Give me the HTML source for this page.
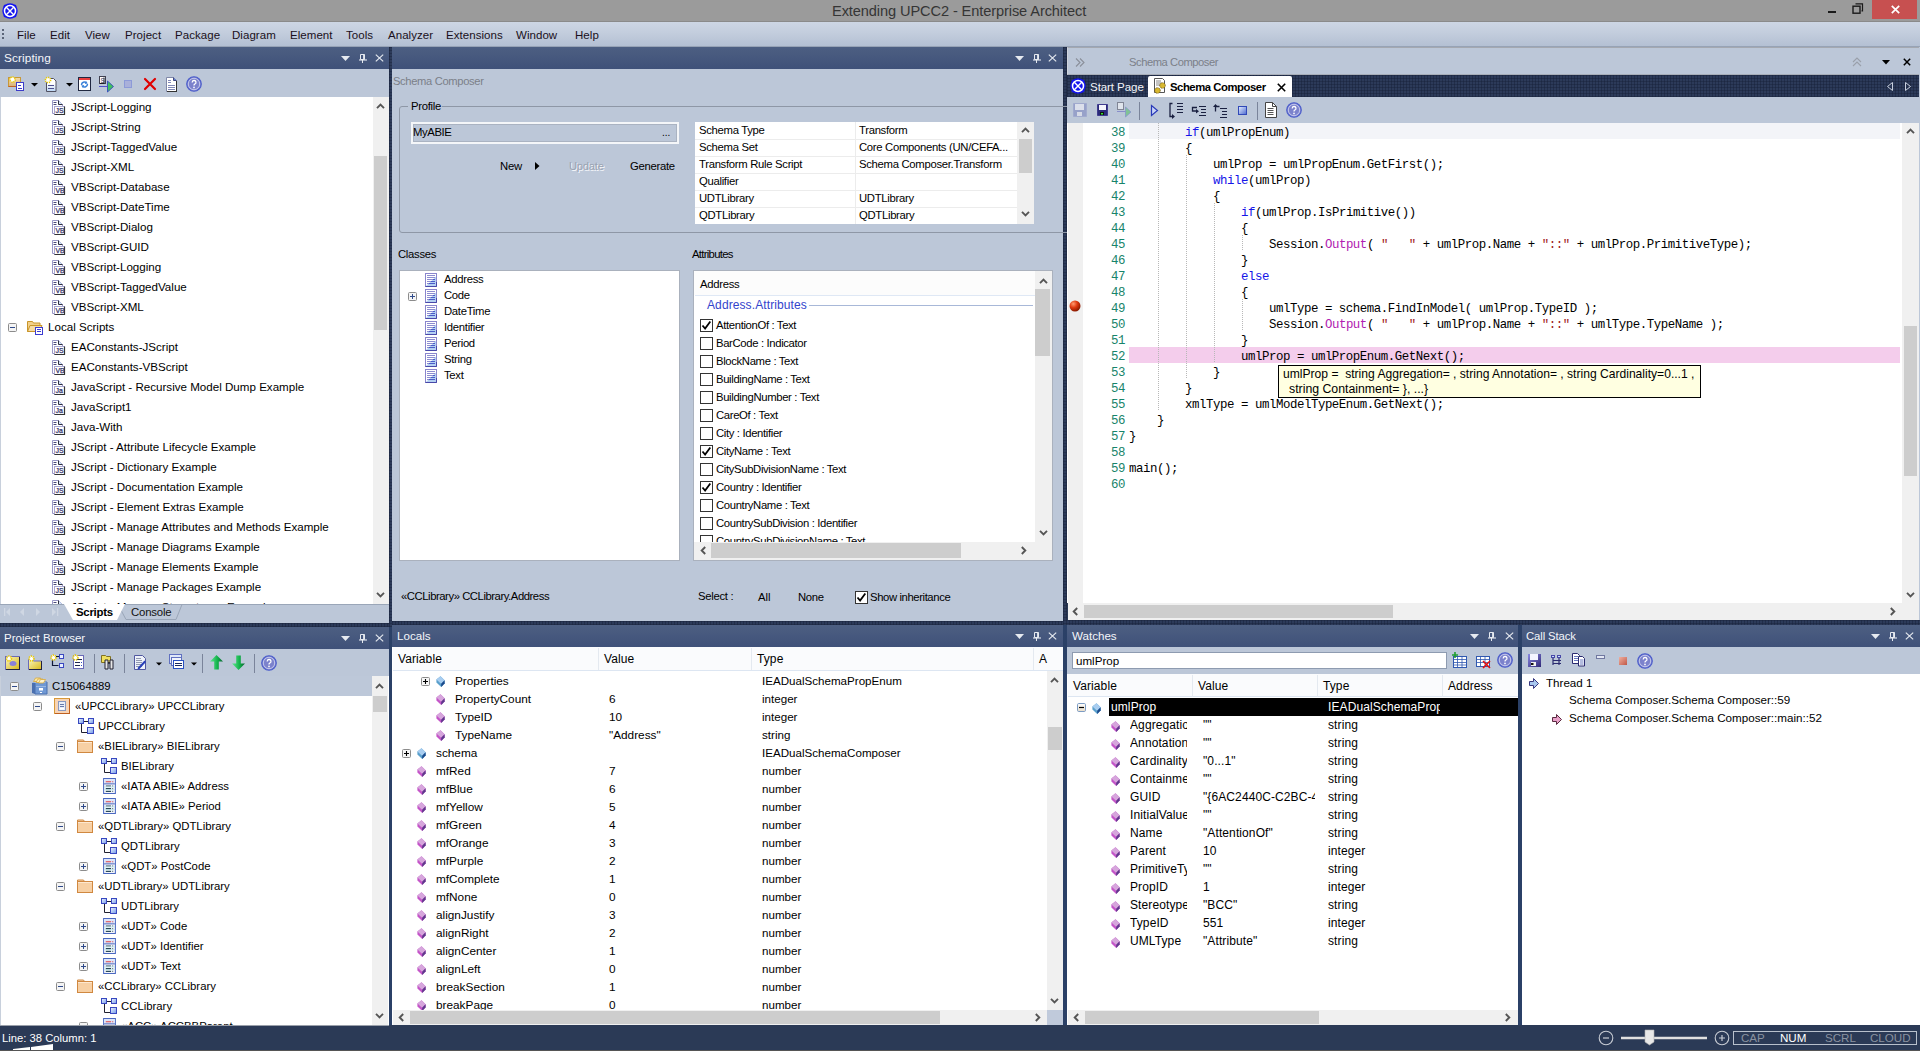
<!DOCTYPE html>
<html><head><meta charset="utf-8"><style>
*{margin:0;padding:0;box-sizing:border-box}
html,body{width:1920px;height:1051px;overflow:hidden;background:#2b3a56;font-family:"Liberation Sans",sans-serif;font-size:11.6px;color:#000}
.a{position:absolute}
.i{position:absolute;overflow:visible}
.t{position:absolute;white-space:nowrap}
.hdr{position:absolute;height:22px;background:linear-gradient(#4d5f82,#3f5179)}
.tb{position:absolute;background:#bcc7d8}
.wh{position:absolute;background:#fff}
.m{font-family:"Liberation Mono",monospace;font-size:12.4px;letter-spacing:-0.44px}
.w{color:#fff}
</style></head><body>

<svg width="0" height="0" style="position:absolute">
<defs>
<symbol id="ea" viewBox="0 0 16 16">
 <circle cx="8" cy="8" r="7.7" fill="#1414f0"/>
 <circle cx="3.4" cy="3.4" r="1.9" fill="#1414f0"/><circle cx="12.6" cy="3.4" r="1.9" fill="#1414f0"/><circle cx="3.4" cy="12.6" r="1.9" fill="#1414f0"/><circle cx="12.6" cy="12.6" r="1.9" fill="#1414f0"/>
 <circle cx="8" cy="8" r="5.5" fill="none" stroke="#fff" stroke-width="1.5"/>
 <path d="M4.3 4.3L11.7 11.7M11.7 4.3L4.3 11.7" stroke="#fff" stroke-width="1.4"/>
</symbol>
<symbol id="scr" viewBox="0 0 14 16">
 <path d="M0.5 0.5H6.5L10.5 4.5V13.5H0.5Z" fill="#fff" stroke="#9a98c8"/>
 <path d="M6.5 0.5V4.5H10.5" fill="#d4e6fa" stroke="#303040"/>
 <path d="M1.5 2.5h3M1.5 4.5h3" stroke="#4a4a78"/>
 <rect x="2.5" y="6.5" width="10" height="8" fill="#fff" stroke="#a8a6d0"/>
 <path d="M12.5 6.5V14.5H2.5" fill="none" stroke="#333" stroke-width="1.2"/>
 <text x="3.6" y="12.9" font-family="Liberation Sans" font-size="6.9" fill="#34346a" stroke="#34346a" stroke-width="0.25" letter-spacing="-0.1">JS</text>
</symbol>
<symbol id="scrvb" viewBox="0 0 14 16">
 <path d="M0.5 0.5H6.5L10.5 4.5V13.5H0.5Z" fill="#fff" stroke="#9a98c8"/>
 <path d="M6.5 0.5V4.5H10.5" fill="#d4e6fa" stroke="#303040"/>
 <path d="M1.5 2.5h3M1.5 4.5h3" stroke="#4a4a78"/>
 <rect x="2.5" y="6.5" width="10" height="8" fill="#fff" stroke="#a8a6d0"/>
 <path d="M12.5 6.5V14.5H2.5" fill="none" stroke="#333" stroke-width="1.2"/>
 <text x="3.6" y="12.9" font-family="Liberation Sans" font-size="6.9" fill="#34346a" stroke="#34346a" stroke-width="0.25" letter-spacing="-0.1">VB</text>
</symbol>
<symbol id="scrja" viewBox="0 0 14 16">
 <path d="M0.5 0.5H6.5L10.5 4.5V13.5H0.5Z" fill="#fff" stroke="#9a98c8"/>
 <path d="M6.5 0.5V4.5H10.5" fill="#d4e6fa" stroke="#303040"/>
 <path d="M1.5 2.5h3M1.5 4.5h3" stroke="#4a4a78"/>
 <rect x="2.5" y="6.5" width="10" height="8" fill="#fff" stroke="#a8a6d0"/>
 <path d="M12.5 6.5V14.5H2.5" fill="none" stroke="#333" stroke-width="1.2"/>
 <text x="3.6" y="12.9" font-family="Liberation Sans" font-size="6.9" fill="#34346a" stroke="#34346a" stroke-width="0.25" letter-spacing="-0.1">Ja</text>
</symbol>
<symbol id="pm" viewBox="0 0 9 9">
 <rect x="0.5" y="0.5" width="8" height="8" rx="1" fill="#f4f4f4" stroke="#8c8c8c"/>
 <path d="M2 4.5h5" stroke="#2f4a8a"/>
</symbol>
<symbol id="pp" viewBox="0 0 9 9">
 <rect x="0.5" y="0.5" width="8" height="8" rx="1" fill="#f4f4f4" stroke="#8c8c8c"/>
 <path d="M2 4.5h5M4.5 2v5" stroke="#2f4a8a"/>
</symbol>
<symbol id="fold" viewBox="0 0 16 16">
 <path d="M0.5 2.5h5l1 1.5h6.5v8.5h-12.5z" fill="#f2d08a" stroke="#c8952a"/>
 <path d="M0.5 12.5l2.5-6h12l-2.5 6z" fill="#f7dca4" stroke="#c8952a"/>
 <rect x="8.5" y="8.5" width="7" height="7" fill="#fff" stroke="#3b3bd0"/>
 <path d="M10 10.5h4M10 12.5h4" stroke="#3b3bd0"/>
</symbol>
<symbol id="hdrdn" viewBox="0 0 9 6"><path d="M0 0h9l-4.5 5z" fill="#e6eaf0"/></symbol>
<symbol id="pin" viewBox="0 0 8 9"><path d="M1.5 0.5h4v5h-4z" fill="none" stroke="#e6eaf0"/><path d="M4.8 0.5v5" stroke="#e6eaf0" stroke-width="1.4"/><path d="M0 6h8" stroke="#e6eaf0" stroke-width="1.1"/><path d="M3.5 6v3" stroke="#e6eaf0"/></symbol>
<symbol id="hx" viewBox="0 0 9 8"><path d="M0.8 0.6l7.4 6.8M8.2 0.6l-7.4 6.8" stroke="#e6eaf0" stroke-width="1.15"/></symbol>
<symbol id="up" viewBox="0 0 9 6"><path d="M1 5.2l3.5-3.5l3.5 3.5" fill="none" stroke="#555" stroke-width="1.9"/></symbol>
<symbol id="dn" viewBox="0 0 9 6"><path d="M1 0.8l3.5 3.5l3.5-3.5" fill="none" stroke="#555" stroke-width="1.9"/></symbol>
<symbol id="lf" viewBox="0 0 6 9"><path d="M5.2 1l-3.5 3.5l3.5 3.5" fill="none" stroke="#555" stroke-width="1.9"/></symbol>
<symbol id="rt" viewBox="0 0 6 9"><path d="M0.8 1l3.5 3.5l-3.5 3.5" fill="none" stroke="#555" stroke-width="1.9"/></symbol>
<symbol id="cls" viewBox="0 0 12 14">
 <rect x="0.5" y="0.5" width="11" height="13" fill="#fff" stroke="#8a86cc"/>
 <path d="M1 13L11 3.5V13z" fill="#b4d0f2"/>
 <path d="M2 2.5h8M2 4.5h8M2 6.5h8M2 8.5h8M2 10.5h8" stroke="#8c8cd0"/>
 <path d="M6 8.5h4M4 10.5h6M8 6.5h2" stroke="#4a5cc8"/>
 <path d="M11.5 9v4.5h-11" fill="none" stroke="#4848a8"/>
</symbol>
<symbol id="cb" viewBox="0 0 13 13"><rect x="0.5" y="0.5" width="12" height="12" fill="#fff" stroke="#333"/></symbol>
<symbol id="cbc" viewBox="0 0 13 13"><rect x="0.5" y="0.5" width="12" height="12" fill="#fff" stroke="#333"/><path d="M2.5 6.5l2.6 3l5.2-7" fill="none" stroke="#000" stroke-width="1.8"/></symbol>
<symbol id="dia" viewBox="0 0 9 11">
 <path d="M4.5 0.2L8.6 4.3V7.4L5.2 10.9L0.4 6.4V3.4Z" fill="#c455c8"/>
 <path d="M4.5 0.2L8.6 4.3L5.1 7.7L0.4 3.4Z" fill="#d6a6dc"/>
 <path d="M8.6 4.3V7.4L5.2 10.9V7.7Z" fill="#5e3a8c"/>
</symbol>
<symbol id="diab" viewBox="0 0 9 11">
 <path d="M4.5 0.2L8.6 4.3V7.4L5.2 10.9L0.4 6.4V3.4Z" fill="#5aa0cc"/>
 <path d="M4.5 0.2L8.6 4.3L5.1 7.7L0.4 3.4Z" fill="#a8cdf0"/>
 <path d="M8.6 4.3V7.4L5.2 10.9V7.7Z" fill="#1c4a8c"/>
</symbol>
<symbol id="pmw" viewBox="0 0 9 9">
 <defs><linearGradient id="gpm" x1="0" y1="0" x2="0" y2="1"><stop offset="0" stop-color="#fff"/><stop offset="1" stop-color="#e8dcc8"/></linearGradient></defs>
 <rect x="0.5" y="0.5" width="8" height="8" rx="1.2" fill="url(#gpm)" stroke="#7c9cc4"/>
 <path d="M2 4.5h5" stroke="#000" stroke-width="1.2"/>
</symbol>
<symbol id="ppw" viewBox="0 0 9 9">
 <rect x="0.5" y="0.5" width="8" height="8" rx="1" fill="#f6f6f6" stroke="#8c8c8c"/>
 <path d="M2 4.5h5M4.5 2v5" stroke="#000" stroke-width="1.1"/>
</symbol>
<symbol id="pkgf" viewBox="0 0 16 14">
 <path d="M0.5 2.5v-1.5h6l1 1.5" fill="#f8d8b0" stroke="#d08840"/>
 <rect x="0.5" y="2.5" width="15" height="11" fill="#f7d0a4" stroke="#d08840"/>
 <path d="M1 3.5h14" stroke="#fde8d0"/>
</symbol>
<symbol id="diag" viewBox="0 0 16 16">
 <defs><linearGradient id="gdg" x1="0" y1="0" x2="1" y2="1"><stop offset="0" stop-color="#f0f6ff"/><stop offset="1" stop-color="#7098e8"/></linearGradient></defs>
 <path d="M3.5 6v8.5h6M6 3.5h4" fill="none" stroke="#202030"/>
 <rect x="0.5" y="0.5" width="5" height="5" fill="url(#gdg)" stroke="#3848c0"/>
 <rect x="10.5" y="0.5" width="5" height="5" fill="url(#gdg)" stroke="#3848c0"/>
 <rect x="9.5" y="9.5" width="6" height="6" fill="url(#gdg)" stroke="#3848c0"/>
</symbol>
<symbol id="clsb" viewBox="0 0 12 15">
 <rect x="0.5" y="0.5" width="11" height="14" fill="#fff" stroke="#4a68c0"/>
 <rect x="1" y="1" width="10" height="4" fill="#dce6fa"/>
 <path d="M2.5 3.5h5" stroke="#e05050"/><path d="M8.5 3.5h1" stroke="#e05050"/>
 <path d="M1 5.5h10" stroke="#4a68c0"/>
 <path d="M2.5 7.5h5M2.5 10h5M2.5 12.5h5" stroke="#2a4a5a" stroke-width="1.1"/>
 <path d="M8.5 7.5h1M8.5 10h1M8.5 12.5h1" stroke="#2a4a5a"/>
 <path d="M1 8.5h10M1 11h10" stroke="#a8e0e8" opacity="0.7"/>
</symbol>
<symbol id="upkg" viewBox="0 0 16 16">
 <rect x="0.5" y="0.5" width="15" height="15" fill="#f8d4b4" stroke="#d89838"/>
 <path d="M1 15.5h15M15.5 1v15" stroke="#c06020"/>
 <rect x="4.5" y="3.5" width="7" height="9" fill="#e8eef8" stroke="#8898c0"/>
 <path d="M6 6.5h4M6 8.5h4" stroke="#6878a8"/><rect x="6" y="10" width="4" height="1.5" fill="#fff"/>
</symbol>
<symbol id="db" viewBox="0 0 17 18">
 <path d="M1 6l3-1v12l-3-1z" fill="#4a70b0"/>
 <path d="M4 5h12v12h-12z" fill="#6f98d4" stroke="#4a70b0"/>
 <path d="M1 6l3-1h12l-3 1z" fill="#a8c4ec"/>
 <path d="M2.5 4.5l2-3.5h5l-2 3.5z" fill="#fbe8a8" stroke="#d8a838" stroke-width="0.8"/>
 <path d="M5 5.5l2-3.5h5l-2 3.5z" fill="#fdeebc" stroke="#d8a838" stroke-width="0.8"/>
 <path d="M7.5 6l2-3.5h5l-2 3.5z" fill="#fff4d0" stroke="#d8a838" stroke-width="0.8"/>
 <path d="M5 9.5h10" stroke="#9ab8e4"/>
 <rect x="8" y="11" width="4" height="2.5" fill="#fff"/><rect x="9" y="15" width="2" height="1" fill="#fff"/>
</symbol>
<symbol id="help" viewBox="0 0 16 16">
 <circle cx="8" cy="8" r="7.3" fill="#7c82cc" stroke="#4a5ccc" stroke-width="1.1"/>
 <circle cx="8" cy="8" r="5.7" fill="none" stroke="#d4d8f4" stroke-width="0.8"/>
 <path d="M6.2 6.4a1.9 1.9 0 1 1 2.5 1.8c-0.6 0.3-0.7 0.7-0.7 1.4" fill="none" stroke="#fff" stroke-width="1.3"/>
 <circle cx="8" cy="11.4" r="0.85" fill="#fff"/>
</symbol>
<symbol id="doc" viewBox="0 0 12 16">
 <path d="M0.5 0.5h7l4 4v11h-11z" fill="#fff" stroke="#444"/>
 <path d="M7.5 0.5v4h4" fill="none" stroke="#444"/>
 <path d="M2.5 6.5h6M2.5 8.5h6M2.5 10.5h6M2.5 12.5h6" stroke="#555"/>
</symbol>
<symbol id="dd" viewBox="0 0 7 4"><path d="M0 0h7l-3.5 4z" fill="#000"/></symbol>
</defs></svg>
<div class="a" style="left:0px;top:0px;width:1920px;height:22px;background:#9b9b9b;border-bottom:1px solid #8a8a8a"></div>
<svg class="i" style="left:2px;top:3px;" width="16" height="16"><use href="#ea"/></svg>
<div class="t" style="left:832px;top:1.0px;line-height:20px;font-size:14.6px;color:#353535;letter-spacing:-0.1px">Extending UPCC2 - Enterprise Architect</div>
<div class="a" style="left:1828px;top:11px;width:8px;height:2px;background:#1a1a1a"></div>
<svg class="i" style="left:1852px;top:3px" width="12" height="12"><path d="M3.5 0.8h7v7h-1" fill="none" stroke="#1a1a1a" stroke-width="1.2"/><rect x="1" y="3.2" width="7" height="7" fill="none" stroke="#1a1a1a" stroke-width="1.4"/></svg>
<div class="a" style="left:1872px;top:0px;width:45px;height:19px;background:#c75050"></div>
<svg class="i" style="left:1891px;top:5px" width="9" height="9"><path d="M0.8 0.8l7.4 7.4M8.2 0.8l-7.4 7.4" stroke="#fff" stroke-width="1.7"/></svg>
<div class="a" style="left:0px;top:22px;width:1920px;height:25px;background:linear-gradient(#cdd6e4,#c3cddd 45%,#b4c0d3);border-bottom:1px solid #97a3b6"></div>
<div class="a" style="left:2px;top:29px;width:2px;height:2px;background:#5a6478"></div>
<div class="a" style="left:2px;top:33px;width:2px;height:2px;background:#5a6478"></div>
<div class="a" style="left:2px;top:37px;width:2px;height:2px;background:#5a6478"></div>
<div class="t" style="left:17px;top:27.0px;line-height:16px;font-size:11.5px;color:#1a1020;letter-spacing:0.05px">File</div>
<div class="t" style="left:50px;top:27.0px;line-height:16px;font-size:11.5px;color:#1a1020;letter-spacing:0.05px">Edit</div>
<div class="t" style="left:85px;top:27.0px;line-height:16px;font-size:11.5px;color:#1a1020;letter-spacing:0.05px">View</div>
<div class="t" style="left:125px;top:27.0px;line-height:16px;font-size:11.5px;color:#1a1020;letter-spacing:0.05px">Project</div>
<div class="t" style="left:175px;top:27.0px;line-height:16px;font-size:11.5px;color:#1a1020;letter-spacing:0.05px">Package</div>
<div class="t" style="left:232px;top:27.0px;line-height:16px;font-size:11.5px;color:#1a1020;letter-spacing:0.05px">Diagram</div>
<div class="t" style="left:290px;top:27.0px;line-height:16px;font-size:11.5px;color:#1a1020;letter-spacing:0.05px">Element</div>
<div class="t" style="left:346px;top:27.0px;line-height:16px;font-size:11.5px;color:#1a1020;letter-spacing:0.05px">Tools</div>
<div class="t" style="left:388px;top:27.0px;line-height:16px;font-size:11.5px;color:#1a1020;letter-spacing:0.05px">Analyzer</div>
<div class="t" style="left:446px;top:27.0px;line-height:16px;font-size:11.5px;color:#1a1020;letter-spacing:0.05px">Extensions</div>
<div class="t" style="left:516px;top:27.0px;line-height:16px;font-size:11.5px;color:#1a1020;letter-spacing:0.05px">Window</div>
<div class="t" style="left:575px;top:27.0px;line-height:16px;font-size:11.5px;color:#1a1020;letter-spacing:0.05px">Help</div>
<div class="hdr" style="left:0;top:47px;width:389px"></div>
<div class="t" style="left:4px;top:50.0px;line-height:16px;font-size:11.8px;color:#f4f6fa;letter-spacing:0.1px">Scripting</div>
<svg class="i" style="left:341px;top:56px;" width="9" height="6"><use href="#hdrdn"/></svg>
<svg class="i" style="left:359px;top:54px;" width="8" height="9"><use href="#pin"/></svg>
<svg class="i" style="left:375px;top:54px;" width="9" height="8"><use href="#hx"/></svg>
<div class="a" style="left:0px;top:69px;width:389px;height:28px;background:#bcc7d8"></div>
<svg class="i" style="left:0;top:69px" width="210" height="28">
 <defs><linearGradient id="gfold" x1="0" y1="0" x2="0" y2="1"><stop offset="0" stop-color="#f4dca8"/><stop offset="1" stop-color="#d8b078"/></linearGradient>
 <linearGradient id="gdoc" x1="0" y1="0" x2="0" y2="1"><stop offset="0.4" stop-color="#fff"/><stop offset="1" stop-color="#b8d4f4"/></linearGradient></defs>
 <rect x="8.5" y="8.5" width="12" height="9" fill="url(#gfold)" stroke="#c89838"/><path d="M8.5 17.5h12" stroke="#c06020"/>
 <circle cx="12.5" cy="10.5" r="2.6" fill="#fff" stroke="#e8c800" stroke-width="1.6" stroke-dasharray="1.1 0.9"/>
 <rect x="16.5" y="13.5" width="7" height="8" fill="#fff" stroke="#3c3cc8"/><path d="M18 16.5h3M18 19.5h4" stroke="#3c3cc8"/>
 <path d="M31 83.5" /><path d="M31 14h7l-3.5 3.5z" fill="#000"/>
 <path d="M46.5 9.5h7l2.5 2.5v10.5h-9.5z" fill="url(#gdoc)" stroke="#505060"/><path d="M48 16.5h6M48 19.5h6" stroke="#505090"/>
 <circle cx="48" cy="11" r="2.6" fill="#fff" stroke="#e8c800" stroke-width="1.6" stroke-dasharray="1.1 0.9"/>
 <path d="M66 14h7l-3.5 3.5z" fill="#000"/>
 <rect x="78.5" y="8.5" width="12" height="13" fill="#fff" stroke="#202840"/><rect x="79" y="9" width="11" height="2" fill="#e84040"/>
 <path d="M81.5 16a3 3 0 0 1 5-2.2" fill="none" stroke="#3a80d8" stroke-width="1.5"/><path d="M86 12l1.8 2.6l-3 0.3z" fill="#3a80d8"/>
 <path d="M87.5 15a3 3 0 0 1-5 2.2" fill="none" stroke="#3a80d8" stroke-width="1.5"/><path d="M83 19l-1.8-2.6l3-0.3z" fill="#3a80d8"/>
 <rect x="99.5" y="7.5" width="6" height="7" fill="#fff" stroke="#404050"/><path d="M104 8.5v6h-4" fill="none" stroke="#202020"/>
 <text x="100.6" y="13.6" font-size="6.5" font-family="Liberation Sans" fill="#404060">S</text>
 <path d="M99 17.5h8" stroke="#5050c8"/><path d="M107.5 12v11l6-5.5z" fill="#40c060" stroke="#3848c0" stroke-width="0.9"/>
 <rect x="124.5" y="11.5" width="7" height="7" fill="#a9b0da" stroke="#8c9ad8"/>
 <path d="M145 10l10 10M155 10l-10 10" stroke="#e00000" stroke-width="2.2" stroke-linecap="round"/>
 <path d="M166.5 8.5h7l3 3v11h-10z" fill="#fff" stroke="#8088a8"/><path d="M173.5 8.5v3h3" fill="#6080d0" stroke="#404880"/><path d="M167 22.5h10M176.5 12v11" stroke="#333"/>
 <path d="M168 11.5h3M168 13.5h3M168 16.5h7M168 18.5h7M168 20.5h7" stroke="#8088b8"/>
</svg>
<svg class="i" style="left:186px;top:76px;" width="16" height="16"><use href="#help"/></svg>
<div class="a" style="left:0px;top:97px;width:389px;height:507px;background:#fff;border-left:1px solid #c8d0dc"></div>
<div class="a" style="left:0;top:97px;width:373px;height:507px;overflow:hidden">
<svg class="i" style="left:52px;top:3px;" width="14" height="16"><use href="#scr"/></svg>
<div class="t" style="left:71px;top:2.0px;line-height:16px;">JScript-Logging</div>
<svg class="i" style="left:52px;top:23px;" width="14" height="16"><use href="#scr"/></svg>
<div class="t" style="left:71px;top:22.0px;line-height:16px;">JScript-String</div>
<svg class="i" style="left:52px;top:43px;" width="14" height="16"><use href="#scr"/></svg>
<div class="t" style="left:71px;top:42.0px;line-height:16px;">JScript-TaggedValue</div>
<svg class="i" style="left:52px;top:63px;" width="14" height="16"><use href="#scr"/></svg>
<div class="t" style="left:71px;top:62.0px;line-height:16px;">JScript-XML</div>
<svg class="i" style="left:52px;top:83px;" width="14" height="16"><use href="#scrvb"/></svg>
<div class="t" style="left:71px;top:82.0px;line-height:16px;">VBScript-Database</div>
<svg class="i" style="left:52px;top:103px;" width="14" height="16"><use href="#scrvb"/></svg>
<div class="t" style="left:71px;top:102.0px;line-height:16px;">VBScript-DateTime</div>
<svg class="i" style="left:52px;top:123px;" width="14" height="16"><use href="#scrvb"/></svg>
<div class="t" style="left:71px;top:122.0px;line-height:16px;">VBScript-Dialog</div>
<svg class="i" style="left:52px;top:143px;" width="14" height="16"><use href="#scrvb"/></svg>
<div class="t" style="left:71px;top:142.0px;line-height:16px;">VBScript-GUID</div>
<svg class="i" style="left:52px;top:163px;" width="14" height="16"><use href="#scrvb"/></svg>
<div class="t" style="left:71px;top:162.0px;line-height:16px;">VBScript-Logging</div>
<svg class="i" style="left:52px;top:183px;" width="14" height="16"><use href="#scrvb"/></svg>
<div class="t" style="left:71px;top:182.0px;line-height:16px;">VBScript-TaggedValue</div>
<svg class="i" style="left:52px;top:203px;" width="14" height="16"><use href="#scrvb"/></svg>
<div class="t" style="left:71px;top:202.0px;line-height:16px;">VBScript-XML</div>
<svg class="i" style="left:8px;top:226px;" width="9" height="9"><use href="#pm"/></svg>
<svg class="i" style="left:27px;top:222px;" width="16" height="16"><use href="#fold"/></svg>
<div class="t" style="left:48px;top:222.0px;line-height:16px;">Local Scripts</div>
<svg class="i" style="left:52px;top:243px;" width="14" height="16"><use href="#scr"/></svg>
<div class="t" style="left:71px;top:242.0px;line-height:16px;">EAConstants-JScript</div>
<svg class="i" style="left:52px;top:263px;" width="14" height="16"><use href="#scrvb"/></svg>
<div class="t" style="left:71px;top:262.0px;line-height:16px;">EAConstants-VBScript</div>
<svg class="i" style="left:52px;top:283px;" width="14" height="16"><use href="#scrja"/></svg>
<div class="t" style="left:71px;top:282.0px;line-height:16px;">JavaScript - Recursive Model Dump Example</div>
<svg class="i" style="left:52px;top:303px;" width="14" height="16"><use href="#scrja"/></svg>
<div class="t" style="left:71px;top:302.0px;line-height:16px;">JavaScript1</div>
<svg class="i" style="left:52px;top:323px;" width="14" height="16"><use href="#scrja"/></svg>
<div class="t" style="left:71px;top:322.0px;line-height:16px;">Java-With</div>
<svg class="i" style="left:52px;top:343px;" width="14" height="16"><use href="#scr"/></svg>
<div class="t" style="left:71px;top:342.0px;line-height:16px;">JScript - Attribute Lifecycle Example</div>
<svg class="i" style="left:52px;top:363px;" width="14" height="16"><use href="#scr"/></svg>
<div class="t" style="left:71px;top:362.0px;line-height:16px;">JScript - Dictionary Example</div>
<svg class="i" style="left:52px;top:383px;" width="14" height="16"><use href="#scr"/></svg>
<div class="t" style="left:71px;top:382.0px;line-height:16px;">JScript - Documentation Example</div>
<svg class="i" style="left:52px;top:403px;" width="14" height="16"><use href="#scr"/></svg>
<div class="t" style="left:71px;top:402.0px;line-height:16px;">JScript - Element Extras Example</div>
<svg class="i" style="left:52px;top:423px;" width="14" height="16"><use href="#scr"/></svg>
<div class="t" style="left:71px;top:422.0px;line-height:16px;">JScript - Manage Attributes and Methods Example</div>
<svg class="i" style="left:52px;top:443px;" width="14" height="16"><use href="#scr"/></svg>
<div class="t" style="left:71px;top:442.0px;line-height:16px;">JScript - Manage Diagrams Example</div>
<svg class="i" style="left:52px;top:463px;" width="14" height="16"><use href="#scr"/></svg>
<div class="t" style="left:71px;top:462.0px;line-height:16px;">JScript - Manage Elements Example</div>
<svg class="i" style="left:52px;top:483px;" width="14" height="16"><use href="#scr"/></svg>
<div class="t" style="left:71px;top:482.0px;line-height:16px;">JScript - Manage Packages Example</div>
<svg class="i" style="left:52px;top:503px;" width="14" height="16"><use href="#scr"/></svg>
<div class="t" style="left:71px;top:502.0px;line-height:16px;">JScript - Manage Stereotypes Example</div>
</div>
<div class="a" style="left:373px;top:97px;width:16px;height:507px;background:#f0f0f0"></div>
<div class="a" style="left:374px;top:156px;width:13px;height:174px;background:#cdcdcd"></div>
<svg class="i" style="left:376px;top:103px;" width="9" height="6"><use href="#up"/></svg>
<svg class="i" style="left:376px;top:592px;" width="9" height="6"><use href="#dn"/></svg>
<div class="a" style="left:0px;top:604px;width:389px;height:19px;background:#bcc7d8"></div>
<svg class="i" style="left:0;top:604px" width="389" height="16">
 <g fill="#cfd7e3"><path d="M4 4v8h1.3v-8zM10 4l-4 4l4 4z"/><path d="M24 4l-4 4l4 4z"/><path d="M36 4l4 4l-4 4z"/><path d="M52 4l4 4l-4 4zM57 4v8h1.3v-8z"/></g>
 <path d="M118 0.5l8 15h50l6-15" fill="none" stroke="#9aa6b8"/>
 <path d="M64 0l9 16h44l8-16z" fill="#fff"/>
 <path d="M64 0.5h-64" stroke="#9aa6b8"/><path d="M125 0.5h264" stroke="#9aa6b8"/>
</svg>
<div class="t" style="left:76px;top:604.0px;line-height:16px;font-weight:bold;font-size:11.4px;letter-spacing:-0.25px">Scripts</div>
<div class="t" style="left:131px;top:604.0px;line-height:16px;font-size:11.4px;color:#111;letter-spacing:-0.2px">Console</div>
<div class="a" style="left:389px;top:47px;width:3px;height:573px;background-color:#1d2842;background-image:radial-gradient(circle,#43557c 0.75px,transparent 1.1px);background-size:3px 3px;background-position:0.5px 0.5px"></div>
<div class="a" style="left:1063px;top:47px;width:4px;height:573px;background-color:#1d2842;background-image:radial-gradient(circle,#43557c 0.75px,transparent 1.1px);background-size:3px 3px;background-position:0.5px 0.5px"></div>
<div class="a" style="left:0px;top:623px;width:389px;height:4px;background-color:#1d2842;background-image:radial-gradient(circle,#43557c 0.75px,transparent 1.1px);background-size:3px 3px;background-position:0.5px 0.5px"></div>
<div class="a" style="left:392px;top:621px;width:671px;height:4px;background-color:#1d2842;background-image:radial-gradient(circle,#43557c 0.75px,transparent 1.1px);background-size:3px 3px;background-position:0.5px 0.5px"></div>
<div class="a" style="left:1063px;top:620px;width:857px;height:5px;background-color:#1d2842;background-image:radial-gradient(circle,#43557c 0.75px,transparent 1.1px);background-size:3px 3px;background-position:0.5px 0.5px"></div>
<div class="a" style="left:389px;top:620px;width:3px;height:7px;background-color:#1d2842;background-image:radial-gradient(circle,#43557c 0.75px,transparent 1.1px);background-size:3px 3px;background-position:0.5px 0.5px"></div>
<div class="a" style="left:389px;top:627px;width:3px;height:398px;background-color:#34507e;background-image:radial-gradient(#25375a 0.6px,transparent 0.9px);background-size:2px 2px"></div>
<div class="a" style="left:1063px;top:625px;width:4px;height:400px;background-color:#34507e;background-image:radial-gradient(#25375a 0.6px,transparent 0.9px);background-size:2px 2px"></div>
<div class="a" style="left:1518px;top:625px;width:4px;height:400px;background-color:#34507e;background-image:radial-gradient(#25375a 0.6px,transparent 0.9px);background-size:2px 2px"></div>
<div class="hdr" style="left:392px;top:47px;width:671px"></div>
<svg class="i" style="left:1015px;top:56px;" width="9" height="6"><use href="#hdrdn"/></svg>
<svg class="i" style="left:1033px;top:54px;" width="8" height="9"><use href="#pin"/></svg>
<svg class="i" style="left:1048px;top:54px;" width="9" height="8"><use href="#hx"/></svg>
<div class="a" style="left:392px;top:69px;width:671px;height:552px;background:#bcc7d8"></div>
<div class="t" style="left:393px;top:73.0px;line-height:16px;font-size:11.2px;color:#7b7f88;letter-spacing:-0.35px">Schema Composer</div>
<div class="a" style="left:399px;top:106px;width:680px;height:127px;border:1px solid #8e97a6;border-radius:3px"></div>
<div class="a" style="left:408px;top:98px;width:34px;height:14px;background:#bcc7d8"></div>
<div class="t" style="left:411px;top:98.0px;line-height:16px;font-family:Liberation Sans;font-size:11.3px;letter-spacing:-0.3px">Profile</div>
<div class="a" style="left:411px;top:122px;width:268px;height:22px;border:2px solid #f4f6f9;box-shadow:inset 0 0 0 1px #aab3c2;background:#bcc7d8"></div>
<div class="t" style="left:413px;top:124.0px;line-height:16px;font-size:11.3px;letter-spacing:-0.4px">MyABIE</div>
<div class="t" style="left:662px;top:125.0px;line-height:16px;font-size:10px">...</div>
<div class="t" style="left:500px;top:158.0px;line-height:16px;font-size:11.3px;letter-spacing:-0.2px">New</div>
<svg class="i" style="left:535px;top:162px" width="5" height="8"><path d="M0 0l4.5 4l-4.5 4z" fill="#000"/></svg>
<div class="t" style="left:569px;top:158.0px;line-height:16px;font-size:11.3px;color:#9aa3b2;letter-spacing:-0.3px;text-shadow:1px 1px 0 #f4f6fa">Update</div>
<div class="t" style="left:630px;top:158.0px;line-height:16px;font-size:11.3px;letter-spacing:-0.3px">Generate</div>
<div class="a" style="left:695px;top:122px;width:339px;height:102px;background:#fff"></div>
<div class="t" style="left:699px;top:121.5px;line-height:16px;font-size:11.3px;letter-spacing:-0.3px">Schema Type</div>
<div class="t" style="left:859px;top:121.5px;line-height:16px;font-size:11.3px;letter-spacing:-0.3px">Transform</div>
<div class="a" style="left:695px;top:139px;width:322px;height:1px;background:#ececec"></div>
<div class="t" style="left:699px;top:138.5px;line-height:16px;font-size:11.3px;letter-spacing:-0.3px">Schema Set</div>
<div class="t" style="left:859px;top:138.5px;line-height:16px;font-size:11.3px;letter-spacing:-0.3px">Core Components (UN/CEFA...</div>
<div class="a" style="left:695px;top:156px;width:322px;height:1px;background:#ececec"></div>
<div class="t" style="left:699px;top:155.5px;line-height:16px;font-size:11.3px;letter-spacing:-0.3px">Transform Rule Script</div>
<div class="t" style="left:859px;top:155.5px;line-height:16px;font-size:11.3px;letter-spacing:-0.3px">Schema Composer.Transform</div>
<div class="a" style="left:695px;top:173px;width:322px;height:1px;background:#ececec"></div>
<div class="t" style="left:699px;top:172.5px;line-height:16px;font-size:11.3px;letter-spacing:-0.3px">Qualifier</div>
<div class="t" style="left:859px;top:172.5px;line-height:16px;font-size:11.3px;letter-spacing:-0.3px"></div>
<div class="a" style="left:695px;top:190px;width:322px;height:1px;background:#ececec"></div>
<div class="t" style="left:699px;top:189.5px;line-height:16px;font-size:11.3px;letter-spacing:-0.3px">UDTLibrary</div>
<div class="t" style="left:859px;top:189.5px;line-height:16px;font-size:11.3px;letter-spacing:-0.3px">UDTLibrary</div>
<div class="a" style="left:695px;top:207px;width:322px;height:1px;background:#ececec"></div>
<div class="t" style="left:699px;top:206.5px;line-height:16px;font-size:11.3px;letter-spacing:-0.3px">QDTLibrary</div>
<div class="t" style="left:859px;top:206.5px;line-height:16px;font-size:11.3px;letter-spacing:-0.3px">QDTLibrary</div>
<div class="a" style="left:855px;top:122px;width:1px;height:102px;background:#ececec"></div>
<div class="a" style="left:1017px;top:122px;width:17px;height:102px;background:#f0f0f0"></div>
<div class="a" style="left:1019px;top:139px;width:13px;height:34px;background:#cdcdcd"></div>
<svg class="i" style="left:1021px;top:127px;" width="9" height="6"><use href="#up"/></svg>
<svg class="i" style="left:1021px;top:211px;" width="9" height="6"><use href="#dn"/></svg>
<div class="t" style="left:398px;top:246.0px;line-height:16px;font-size:11.3px;letter-spacing:-0.3px">Classes</div>
<div class="a" style="left:399px;top:270px;width:281px;height:291px;background:#fff;border:1px solid #aab1bd"></div>
<svg class="i" style="left:425px;top:273px;" width="12" height="14"><use href="#cls"/></svg>
<div class="t" style="left:444px;top:271.0px;line-height:16px;font-size:11.3px;letter-spacing:-0.3px">Address</div>
<svg class="i" style="left:408px;top:292px;" width="9" height="9"><use href="#pp"/></svg>
<svg class="i" style="left:425px;top:289px;" width="12" height="14"><use href="#cls"/></svg>
<div class="t" style="left:444px;top:287.0px;line-height:16px;font-size:11.3px;letter-spacing:-0.3px">Code</div>
<svg class="i" style="left:425px;top:305px;" width="12" height="14"><use href="#cls"/></svg>
<div class="t" style="left:444px;top:303.0px;line-height:16px;font-size:11.3px;letter-spacing:-0.3px">DateTime</div>
<svg class="i" style="left:425px;top:321px;" width="12" height="14"><use href="#cls"/></svg>
<div class="t" style="left:444px;top:319.0px;line-height:16px;font-size:11.3px;letter-spacing:-0.3px">Identifier</div>
<svg class="i" style="left:425px;top:337px;" width="12" height="14"><use href="#cls"/></svg>
<div class="t" style="left:444px;top:335.0px;line-height:16px;font-size:11.3px;letter-spacing:-0.3px">Period</div>
<svg class="i" style="left:425px;top:353px;" width="12" height="14"><use href="#cls"/></svg>
<div class="t" style="left:444px;top:351.0px;line-height:16px;font-size:11.3px;letter-spacing:-0.3px">String</div>
<svg class="i" style="left:425px;top:369px;" width="12" height="14"><use href="#cls"/></svg>
<div class="t" style="left:444px;top:367.0px;line-height:16px;font-size:11.3px;letter-spacing:-0.3px">Text</div>
<div class="t" style="left:692px;top:246.0px;line-height:16px;font-size:11.3px;letter-spacing:-0.7px">Attributes</div>
<div class="a" style="left:693px;top:270px;width:360px;height:291px;background:#fff;border:1px solid #aab1bd"></div>
<div class="a" style="left:694px;top:271px;width:341px;height:24px;background:#fcfcfc"></div>
<div class="a" style="left:695px;top:295px;width:340px;height:1px;background:#dfe8f5"></div>
<div class="t" style="left:700px;top:276.0px;line-height:16px;font-size:11.3px;letter-spacing:-0.3px">Address</div>
<div class="t" style="left:707px;top:297.0px;line-height:16px;font-size:12px;color:#3344cc;letter-spacing:0.1px">Address.Attributes</div>
<div class="a" style="left:809px;top:305px;width:224px;height:1px;background:#a8b8d8"></div>
<div class="a" style="left:694px;top:271px;width:341px;height:271px;overflow:hidden">
<svg class="i" style="left:6px;top:48px;" width="13" height="13"><use href="#cbc"/></svg>
<div class="t" style="left:22px;top:46.0px;line-height:16px;font-size:11.3px;letter-spacing:-0.35px">AttentionOf : Text</div>
<svg class="i" style="left:6px;top:66px;" width="13" height="13"><use href="#cb"/></svg>
<div class="t" style="left:22px;top:64.0px;line-height:16px;font-size:11.3px;letter-spacing:-0.35px">BarCode : Indicator</div>
<svg class="i" style="left:6px;top:84px;" width="13" height="13"><use href="#cb"/></svg>
<div class="t" style="left:22px;top:82.0px;line-height:16px;font-size:11.3px;letter-spacing:-0.35px">BlockName : Text</div>
<svg class="i" style="left:6px;top:102px;" width="13" height="13"><use href="#cb"/></svg>
<div class="t" style="left:22px;top:100.0px;line-height:16px;font-size:11.3px;letter-spacing:-0.35px">BuildingName : Text</div>
<svg class="i" style="left:6px;top:120px;" width="13" height="13"><use href="#cb"/></svg>
<div class="t" style="left:22px;top:118.0px;line-height:16px;font-size:11.3px;letter-spacing:-0.35px">BuildingNumber : Text</div>
<svg class="i" style="left:6px;top:138px;" width="13" height="13"><use href="#cb"/></svg>
<div class="t" style="left:22px;top:136.0px;line-height:16px;font-size:11.3px;letter-spacing:-0.35px">CareOf : Text</div>
<svg class="i" style="left:6px;top:156px;" width="13" height="13"><use href="#cb"/></svg>
<div class="t" style="left:22px;top:154.0px;line-height:16px;font-size:11.3px;letter-spacing:-0.35px">City : Identifier</div>
<svg class="i" style="left:6px;top:174px;" width="13" height="13"><use href="#cbc"/></svg>
<div class="t" style="left:22px;top:172.0px;line-height:16px;font-size:11.3px;letter-spacing:-0.35px">CityName : Text</div>
<svg class="i" style="left:6px;top:192px;" width="13" height="13"><use href="#cb"/></svg>
<div class="t" style="left:22px;top:190.0px;line-height:16px;font-size:11.3px;letter-spacing:-0.35px">CitySubDivisionName : Text</div>
<svg class="i" style="left:6px;top:210px;" width="13" height="13"><use href="#cbc"/></svg>
<div class="t" style="left:22px;top:208.0px;line-height:16px;font-size:11.3px;letter-spacing:-0.35px">Country : Identifier</div>
<svg class="i" style="left:6px;top:228px;" width="13" height="13"><use href="#cb"/></svg>
<div class="t" style="left:22px;top:226.0px;line-height:16px;font-size:11.3px;letter-spacing:-0.35px">CountryName : Text</div>
<svg class="i" style="left:6px;top:246px;" width="13" height="13"><use href="#cb"/></svg>
<div class="t" style="left:22px;top:244.0px;line-height:16px;font-size:11.3px;letter-spacing:-0.35px">CountrySubDivision : Identifier</div>
<svg class="i" style="left:6px;top:264px;" width="13" height="13"><use href="#cb"/></svg>
<div class="t" style="left:22px;top:262.0px;line-height:16px;font-size:11.3px;letter-spacing:-0.35px">CountrySubDivisionName : Text</div>
</div>
<div class="a" style="left:1035px;top:271px;width:17px;height:271px;background:#f0f0f0"></div>
<div class="a" style="left:1035px;top:289px;width:15px;height:67px;background:#cdcdcd"></div>
<svg class="i" style="left:1039px;top:278px;" width="9" height="6"><use href="#up"/></svg>
<svg class="i" style="left:1039px;top:530px;" width="9" height="6"><use href="#dn"/></svg>
<div class="a" style="left:694px;top:542px;width:358px;height:18px;background:#f0f0f0"></div>
<div class="a" style="left:711px;top:543px;width:250px;height:15px;background:#cdcdcd"></div>
<svg class="i" style="left:700px;top:546px;" width="6" height="9"><use href="#lf"/></svg>
<svg class="i" style="left:1021px;top:546px;" width="6" height="9"><use href="#rt"/></svg>
<div class="t" style="left:401px;top:588.0px;line-height:16px;font-size:11.3px;letter-spacing:-0.45px">«CCLibrary» CCLibrary.Address</div>
<div class="t" style="left:698px;top:588.0px;line-height:16px;font-size:11.3px;letter-spacing:-0.3px">Select :</div>
<div class="t" style="left:758px;top:589.0px;line-height:16px;font-size:11.3px">All</div>
<div class="t" style="left:798px;top:589.0px;line-height:16px;font-size:11.3px;letter-spacing:-0.3px">None</div>
<svg class="i" style="left:855px;top:591px;" width="13" height="13"><use href="#cbc"/></svg>
<div class="t" style="left:870px;top:589.0px;line-height:16px;font-size:11.3px;letter-spacing:-0.4px">Show inheritance</div>
<div class="a" style="left:1067px;top:47px;width:853px;height:28px;background:#bcc7d8;border-top:1px solid #a4a8b0;border-left:1px solid #d0d4dc;border-bottom:1px solid #a8aeb8"></div>
<svg class="i" style="left:1075px;top:58px" width="10" height="9"><path d="M1 0.5l4 4l-4 4M5 0.5l4 4l-4 4" fill="none" stroke="#8a8f99" stroke-width="1.1"/></svg>
<div class="t" style="left:1129px;top:54.0px;line-height:16px;font-size:11.2px;color:#7b7f88;letter-spacing:-0.45px">Schema Composer</div>
<svg class="i" style="left:1852px;top:57px" width="10" height="10"><path d="M1 5l4-4l4 4M1 9l4-4l4 4" fill="none" stroke="#9aa0aa" stroke-width="1.1"/></svg>
<svg class="i" style="left:1882px;top:60px" width="8" height="5"><path d="M0 0h8l-4 4.5z" fill="#000"/></svg>
<svg class="i" style="left:1903px;top:58px" width="8" height="8"><path d="M0.8 0.8l6.4 6.4M7.2 0.8l-6.4 6.4" stroke="#000" stroke-width="1.5"/></svg>
<div class="a" style="left:1067px;top:75px;width:853px;height:22px;background-color:#1d2842;background-image:radial-gradient(circle,#43557c 0.75px,transparent 1.1px);background-size:3px 3px;background-position:0.5px 0.5px"></div>
<svg class="i" style="left:1070px;top:78px;" width="16" height="16"><use href="#ea"/></svg>
<div class="t" style="left:1090px;top:79.0px;line-height:16px;font-size:11.6px;color:#f2f4f8;letter-spacing:-0.1px">Start Page</div>
<div class="a" style="left:1148px;top:76px;width:144px;height:21px;background:#fff;border-radius:2px 2px 0 0"></div>
<svg class="i" style="left:1153px;top:78px" width="14" height="17">
 <path d="M1.5 0.5h8l2 2v12h-10z" fill="#fff" stroke="#555"/><path d="M3 3h5M3 5h5M3 7h5" stroke="#888"/>
 <circle cx="9.5" cy="7.5" r="2.8" fill="#d8b830" stroke="#604a10" stroke-width="0.8" stroke-dasharray="1 0.6"/>
 <circle cx="4.5" cy="12.5" r="2.8" fill="#d8b830" stroke="#604a10" stroke-width="0.8" stroke-dasharray="1 0.6"/></svg>
<div class="t" style="left:1170px;top:79.0px;line-height:16px;font-size:11.3px;font-weight:bold;letter-spacing:-0.45px">Schema Composer</div>
<svg class="i" style="left:1277px;top:83px" width="9" height="9"><path d="M0.8 0.8l7.4 7.4M8.2 0.8l-7.4 7.4" stroke="#000" stroke-width="1.6"/></svg>
<svg class="i" style="left:1887px;top:82px" width="24" height="9"><path d="M5.5 0.5v8l-5-4z" fill="none" stroke="#c8d0de"/><path d="M18.5 0.5v8l5-4z" fill="none" stroke="#c8d0de"/></svg>
<div class="a" style="left:1067px;top:97px;width:853px;height:26px;background:#bcc7d8"></div>
<svg class="i" style="left:1068px;top:98px" width="240" height="24">
 <defs><linearGradient id="gsq" x1="0" y1="0" x2="1" y2="1"><stop offset="0" stop-color="#e8f0ff"/><stop offset="1" stop-color="#4a68d0"/></linearGradient></defs>
 <g opacity="0.6"><path d="M5.5 5.5h13v13h-13z" fill="#8088c0" stroke="#9098c8"/><rect x="7" y="6" width="9" height="6" fill="#f0f0f8"/><rect x="9" y="14" width="5" height="4" fill="#e8e8f0"/></g>
 <path d="M29.5 6.5h10v11h-10z" fill="#2a2a78" stroke="#403c90"/><rect x="31" y="7" width="7" height="5" fill="#f4f4fc"/><rect x="32" y="14" width="4" height="3" fill="#101010"/><rect x="33" y="15" width="2" height="1.5" fill="#30e030"/>
 <g opacity="0.55"><rect x="49.5" y="4.5" width="6" height="7" fill="#fff" stroke="#505060"/><path d="M49 13.5h9" stroke="#6060c0"/><path d="M57.5 9v10l5.5-5z" fill="#50c060" stroke="#6070c0" stroke-width="0.8"/></g>
 <path d="M71.5 4v18" stroke="#7a849a"/>
 <path d="M83.5 7.5v10l6-5z" fill="#c8d4f8" stroke="#2838b8" stroke-width="1.2"/>
 <path d="M104.5 5.5h-2.5v13h3" fill="none" stroke="#1a2040" stroke-width="1.3"/><path d="M104 16l3 2.5l-3 2.5z" fill="#1a2040"/>
 <path d="M109 5.5h6M109 8.5h6M109 11.5h6M109 14.5h6" stroke="#1a2040"/>
 <path d="M129 9.5h-4.5v3.5h4" fill="none" stroke="#1a2040" stroke-width="1.3"/><path d="M128 11l3 2.2l-3 2.2z" fill="#1a2040"/>
 <path d="M131 8.5h7M133 11.5h5M133 14.5h5M131 17.5h7" stroke="#1a2040"/>
 <path d="M147.5 13.5v-5h4" fill="none" stroke="#1a2040" stroke-width="1.3"/><path d="M145 9l2.5-3l2.5 3z" fill="#1a2040"/>
 <path d="M152 10.5h7M154 13.5h5M154 16.5h5M152 19.5h7" stroke="#1a2040"/>
 <rect x="170.5" y="8.5" width="8" height="8" fill="url(#gsq)" stroke="#3048b8"/>
 <path d="M189.5 4v18" stroke="#7a849a"/>
</svg>
<svg class="i" style="left:1265px;top:102px;" width="12" height="16"><use href="#doc"/></svg>
<svg class="i" style="left:1286px;top:102px;" width="16" height="16"><use href="#help"/></svg>
<div class="a" style="left:1067px;top:123px;width:853px;height:480px;background:#fff"></div>
<div class="a" style="left:1068px;top:123px;width:15px;height:480px;background:#f0f0f0"></div>
<div class="a" style="left:1129px;top:123px;width:771px;height:16px;background:#f3f4f8"></div>
<div class="a" style="left:1129px;top:347px;width:771px;height:16px;background:#f4cdec"></div>
<div class="a" style="left:1158px;top:123px;width:1px;height:288px;background-image:linear-gradient(#b8b8b8 50%,transparent 50%);background-size:1px 2px"></div>
<div class="a" style="left:1186px;top:155px;width:1px;height:224px;background-image:linear-gradient(#b8b8b8 50%,transparent 50%);background-size:1px 2px"></div>
<div class="a" style="left:1214px;top:203px;width:1px;height:160px;background-image:linear-gradient(#b8b8b8 50%,transparent 50%);background-size:1px 2px"></div>
<div class="a" style="left:1242px;top:235px;width:1px;height:16px;background-image:linear-gradient(#b8b8b8 50%,transparent 50%);background-size:1px 2px"></div>
<div class="a" style="left:1242px;top:299px;width:1px;height:32px;background-image:linear-gradient(#b8b8b8 50%,transparent 50%);background-size:1px 2px"></div>
<div class="t m" style="left:1095px;top:125px;line-height:16px;width:30px;text-align:right;color:#17846a">38</div>
<div class="t m" style="left:1129px;top:125px;line-height:16px;white-space:pre"><span style="color:#000">        </span><span style="color:#1515e8">if</span><span style="color:#000">(umlPropEnum)</span></div>
<div class="t m" style="left:1095px;top:141px;line-height:16px;width:30px;text-align:right;color:#17846a">39</div>
<div class="t m" style="left:1129px;top:141px;line-height:16px;white-space:pre"><span style="color:#000">        {</span></div>
<div class="t m" style="left:1095px;top:157px;line-height:16px;width:30px;text-align:right;color:#17846a">40</div>
<div class="t m" style="left:1129px;top:157px;line-height:16px;white-space:pre"><span style="color:#000">            umlProp = umlPropEnum.GetFirst();</span></div>
<div class="t m" style="left:1095px;top:173px;line-height:16px;width:30px;text-align:right;color:#17846a">41</div>
<div class="t m" style="left:1129px;top:173px;line-height:16px;white-space:pre"><span style="color:#000">            </span><span style="color:#1515e8">while</span><span style="color:#000">(umlProp)</span></div>
<div class="t m" style="left:1095px;top:189px;line-height:16px;width:30px;text-align:right;color:#17846a">42</div>
<div class="t m" style="left:1129px;top:189px;line-height:16px;white-space:pre"><span style="color:#000">            {</span></div>
<div class="t m" style="left:1095px;top:205px;line-height:16px;width:30px;text-align:right;color:#17846a">43</div>
<div class="t m" style="left:1129px;top:205px;line-height:16px;white-space:pre"><span style="color:#000">                </span><span style="color:#1515e8">if</span><span style="color:#000">(umlProp.IsPrimitive())</span></div>
<div class="t m" style="left:1095px;top:221px;line-height:16px;width:30px;text-align:right;color:#17846a">44</div>
<div class="t m" style="left:1129px;top:221px;line-height:16px;white-space:pre"><span style="color:#000">                {</span></div>
<div class="t m" style="left:1095px;top:237px;line-height:16px;width:30px;text-align:right;color:#17846a">45</div>
<div class="t m" style="left:1129px;top:237px;line-height:16px;white-space:pre"><span style="color:#000">                    Session.</span><span style="color:#b020b0">Output</span><span style="color:#000">( </span><span style="color:#a02020">"   "</span><span style="color:#000"> + umlProp.Name + </span><span style="color:#a02020">"::"</span><span style="color:#000"> + umlProp.PrimitiveType);</span></div>
<div class="t m" style="left:1095px;top:253px;line-height:16px;width:30px;text-align:right;color:#17846a">46</div>
<div class="t m" style="left:1129px;top:253px;line-height:16px;white-space:pre"><span style="color:#000">                }</span></div>
<div class="t m" style="left:1095px;top:269px;line-height:16px;width:30px;text-align:right;color:#17846a">47</div>
<div class="t m" style="left:1129px;top:269px;line-height:16px;white-space:pre"><span style="color:#000">                </span><span style="color:#1515e8">else</span></div>
<div class="t m" style="left:1095px;top:285px;line-height:16px;width:30px;text-align:right;color:#17846a">48</div>
<div class="t m" style="left:1129px;top:285px;line-height:16px;white-space:pre"><span style="color:#000">                {</span></div>
<div class="t m" style="left:1095px;top:301px;line-height:16px;width:30px;text-align:right;color:#17846a">49</div>
<div class="t m" style="left:1129px;top:301px;line-height:16px;white-space:pre"><span style="color:#000">                    umlType = schema.FindInModel( umlProp.TypeID );</span></div>
<div class="t m" style="left:1095px;top:317px;line-height:16px;width:30px;text-align:right;color:#17846a">50</div>
<div class="t m" style="left:1129px;top:317px;line-height:16px;white-space:pre"><span style="color:#000">                    Session.</span><span style="color:#b020b0">Output</span><span style="color:#000">( </span><span style="color:#a02020">"   "</span><span style="color:#000"> + umlProp.Name + </span><span style="color:#a02020">"::"</span><span style="color:#000"> + umlType.TypeName );</span></div>
<div class="t m" style="left:1095px;top:333px;line-height:16px;width:30px;text-align:right;color:#17846a">51</div>
<div class="t m" style="left:1129px;top:333px;line-height:16px;white-space:pre"><span style="color:#000">                }</span></div>
<div class="t m" style="left:1095px;top:349px;line-height:16px;width:30px;text-align:right;color:#17846a">52</div>
<div class="t m" style="left:1129px;top:349px;line-height:16px;white-space:pre"><span style="color:#000">                umlProp = umlPropEnum.GetNext();</span></div>
<div class="t m" style="left:1095px;top:365px;line-height:16px;width:30px;text-align:right;color:#17846a">53</div>
<div class="t m" style="left:1129px;top:365px;line-height:16px;white-space:pre"><span style="color:#000">            }</span></div>
<div class="t m" style="left:1095px;top:381px;line-height:16px;width:30px;text-align:right;color:#17846a">54</div>
<div class="t m" style="left:1129px;top:381px;line-height:16px;white-space:pre"><span style="color:#000">        }</span></div>
<div class="t m" style="left:1095px;top:397px;line-height:16px;width:30px;text-align:right;color:#17846a">55</div>
<div class="t m" style="left:1129px;top:397px;line-height:16px;white-space:pre"><span style="color:#000">        xmlType = umlModelTypeEnum.GetNext();</span></div>
<div class="t m" style="left:1095px;top:413px;line-height:16px;width:30px;text-align:right;color:#17846a">56</div>
<div class="t m" style="left:1129px;top:413px;line-height:16px;white-space:pre"><span style="color:#000">    }</span></div>
<div class="t m" style="left:1095px;top:429px;line-height:16px;width:30px;text-align:right;color:#17846a">57</div>
<div class="t m" style="left:1129px;top:429px;line-height:16px;white-space:pre"><span style="color:#000">}</span></div>
<div class="t m" style="left:1095px;top:445px;line-height:16px;width:30px;text-align:right;color:#17846a">58</div>
<div class="t m" style="left:1129px;top:445px;line-height:16px;white-space:pre"></div>
<div class="t m" style="left:1095px;top:461px;line-height:16px;width:30px;text-align:right;color:#17846a">59</div>
<div class="t m" style="left:1129px;top:461px;line-height:16px;white-space:pre"><span style="color:#000">main();</span></div>
<div class="t m" style="left:1095px;top:477px;line-height:16px;width:30px;text-align:right;color:#17846a">60</div>
<div class="t m" style="left:1129px;top:477px;line-height:16px;white-space:pre"></div>
<svg class="i" style="left:1069px;top:300px" width="12" height="12"><defs><radialGradient id="bp" cx="0.35" cy="0.3" r="0.7"><stop offset="0" stop-color="#ff9a70"/><stop offset="0.5" stop-color="#e03a10"/><stop offset="1" stop-color="#8a1a00"/></radialGradient></defs><circle cx="6" cy="6" r="5.5" fill="url(#bp)"/></svg>
<div class="a" style="left:1278px;top:365px;width:423px;height:33px;background:#ffffe1;border:1px solid #000"></div>
<div class="t" style="left:1283px;top:366.0px;line-height:16px;font-size:12.1px;white-space:pre">umlProp =  string Aggregation= , string Annotation= , string Cardinality=0...1 ,</div>
<div class="t" style="left:1289px;top:381.0px;line-height:16px;font-size:12.3px">string Containment= }, ...}</div>
<div class="a" style="left:1902px;top:123px;width:17px;height:480px;background:#f0f0f0"></div>
<div class="a" style="left:1904px;top:326px;width:13px;height:150px;background:#cdcdcd"></div>
<svg class="i" style="left:1906px;top:128px;" width="9" height="6"><use href="#up"/></svg>
<svg class="i" style="left:1906px;top:592px;" width="9" height="6"><use href="#dn"/></svg>
<div class="a" style="left:1068px;top:603px;width:852px;height:17px;background:#f0f0f0"></div>
<div class="a" style="left:1084px;top:605px;width:309px;height:13px;background:#cdcdcd"></div>
<svg class="i" style="left:1072px;top:607px;" width="6" height="9"><use href="#lf"/></svg>
<svg class="i" style="left:1890px;top:607px;" width="6" height="9"><use href="#rt"/></svg>
<div class="a" style="left:1919px;top:47px;width:1px;height:573px;background:#bcc7d8"></div>
<div class="hdr" style="left:0;top:627px;width:389px"></div>
<div class="t" style="left:4px;top:630.0px;line-height:16px;font-size:11.5px;color:#f4f6fa">Project Browser</div>
<svg class="i" style="left:341px;top:636px;" width="9" height="6"><use href="#hdrdn"/></svg>
<svg class="i" style="left:359px;top:634px;" width="8" height="9"><use href="#pin"/></svg>
<svg class="i" style="left:375px;top:634px;" width="9" height="8"><use href="#hx"/></svg>
<div class="a" style="left:0px;top:649px;width:389px;height:27px;background:#bcc7d8"></div>
<svg class="i" style="left:0;top:649px" width="389" height="27">
 <defs><linearGradient id="gy" x1="0" y1="0" x2="1" y2="1"><stop offset="0" stop-color="#fbf6c0"/><stop offset="1" stop-color="#d8b818"/></linearGradient>
 <linearGradient id="gg" x1="0" y1="0" x2="1" y2="0"><stop offset="0" stop-color="#60e890"/><stop offset="0.6" stop-color="#10b048"/><stop offset="1" stop-color="#0a6030"/></linearGradient></defs>
 <rect x="5.5" y="7.5" width="14" height="13" fill="url(#gy)" stroke="#6a6ab8"/><path d="M6 20.5h14M19.5 8v13" stroke="#202040"/><ellipse cx="13" cy="14.5" rx="3.5" ry="2.5" fill="#8a80d8"/><circle cx="9" cy="9.5" r="2.4" fill="#fff" stroke="#e8c800" stroke-width="1.8" stroke-dasharray="1.1 0.8"/>
 <path d="M28.5 10.5h4l1 1.5h8v8.5h-13z" fill="url(#gy)" stroke="#6a6ab8"/><path d="M29 20.5h13M41.5 12v9" stroke="#202040"/><circle cx="31.5" cy="9.5" r="2.4" fill="#fff" stroke="#e8c800" stroke-width="1.8" stroke-dasharray="1.1 0.8"/>
 <rect x="59.5" y="5.5" width="4" height="4" fill="#e8f0ff" stroke="#3a48c0"/><rect x="59.5" y="14.5" width="4" height="4" fill="#e8f0ff" stroke="#3a48c0"/><path d="M52.5 11v5.5h6M56 7.5h3" fill="none" stroke="#101838" stroke-width="1.2"/><circle cx="53.5" cy="8.5" r="2.4" fill="#fff" stroke="#e8c800" stroke-width="1.8" stroke-dasharray="1.1 0.8"/>
 <rect x="73.5" y="6.5" width="10" height="13" fill="#fff" stroke="#6a6ab8"/><path d="M76 10.5h6M75 13.5h5M75 16.5h5" stroke="#202850" stroke-width="1.1"/><path d="M81 13.5h1M81 16.5h1" stroke="#3050c0"/><circle cx="75.5" cy="8.5" r="2.4" fill="#fff" stroke="#e8c800" stroke-width="1.8" stroke-dasharray="1.1 0.8"/>
 <path d="M94.5 5v19" stroke="#7a849a"/>
 <path d="M101.5 6.5h4l1 1h4v6h-9z" fill="#f0e060" stroke="#807020"/><path d="M105 11h3v9h-3zM110 11h3v9h-3z" fill="#e8e8e8" stroke="#202030"/><path d="M108 14h2" stroke="#202030" stroke-width="1.5"/>
 <path d="M124.5 5v19" stroke="#7a849a"/>
 <path d="M134.5 6.5h8l3 3v11h-11z" fill="#eef2fa" stroke="#5058a0"/><path d="M136 9.5h5M136 11.5h6M136 13.5h6M136 15.5h6M136 17.5h6" stroke="#9098b0"/><path d="M138 18.5l6.5-7l1.5 1.5l-6.5 7l-2 0.5z" fill="#2840b8"/>
 <path d="M156 13.5h6l-3 3z" fill="#000"/>
 <rect x="169.5" y="5.5" width="12" height="9" fill="#e0e8f8" stroke="#6070c0"/><rect x="171.5" y="8.5" width="10" height="8" fill="#f0f4fc" stroke="#6070c0"/><rect x="173.5" y="11.5" width="10" height="8" fill="#fff" stroke="#2850c0"/><path d="M175 14.5h7M175 16.5h7" stroke="#1a2a60" stroke-width="1.2"/>
 <path d="M191 13.5h6l-3 3z" fill="#000"/>
 <path d="M202.5 5v19" stroke="#7a849a"/>
 <path d="M216.5 6l-6.5 6.5h4.2v8h4.6v-8h4.2z" fill="url(#gg)"/>
 <path d="M238.5 21l-6.5-6.5h4.2v-8h4.6v8h4.2z" fill="url(#gg)"/>
 <path d="M254.5 5v19" stroke="#7a849a"/>
</svg>
<svg class="i" style="left:261px;top:655px;" width="16" height="16"><use href="#help"/></svg>
<div class="a" style="left:0px;top:676px;width:389px;height:349px;background:#fff;border-left:1px solid #c8d0dc"></div>
<div class="a" style="left:1px;top:676px;width:371px;height:20px;background:#bdc8d9"></div>
<div class="a" style="left:1px;top:676px;width:371px;height:349px;overflow:hidden">
<svg class="i" style="left:9px;top:6px;" width="9" height="9"><use href="#pm"/></svg>
<svg class="i" style="left:30px;top:1px;" width="17" height="18"><use href="#db"/></svg>
<div class="t" style="left:51px;top:2.0px;line-height:16px;font-size:11.35px">C15064889</div>
<svg class="i" style="left:32px;top:26px;" width="9" height="9"><use href="#pm"/></svg>
<svg class="i" style="left:53px;top:22px;" width="16" height="16"><use href="#upkg"/></svg>
<div class="t" style="left:74px;top:22.0px;line-height:16px;font-size:11.35px">«UPCCLibrary» UPCCLibrary</div>
<svg class="i" style="left:77px;top:42px;" width="16" height="16"><use href="#diag"/></svg>
<div class="t" style="left:97px;top:42.0px;line-height:16px;font-size:11.35px">UPCCLibrary</div>
<svg class="i" style="left:55px;top:66px;" width="9" height="9"><use href="#pm"/></svg>
<svg class="i" style="left:76px;top:63px;" width="16" height="14"><use href="#pkgf"/></svg>
<div class="t" style="left:97px;top:62.0px;line-height:16px;font-size:11.35px">«BIELibrary» BIELibrary</div>
<svg class="i" style="left:100px;top:82px;" width="16" height="16"><use href="#diag"/></svg>
<div class="t" style="left:120px;top:82.0px;line-height:16px;font-size:11.35px">BIELibrary</div>
<svg class="i" style="left:78px;top:106px;" width="9" height="9"><use href="#pp"/></svg>
<svg class="i" style="left:101px;top:102px;" width="15" height="16"><use href="#clsb"/></svg>
<div class="t" style="left:120px;top:102.0px;line-height:16px;font-size:11.35px">«IATA ABIE» Address</div>
<svg class="i" style="left:78px;top:126px;" width="9" height="9"><use href="#pp"/></svg>
<svg class="i" style="left:101px;top:122px;" width="15" height="16"><use href="#clsb"/></svg>
<div class="t" style="left:120px;top:122.0px;line-height:16px;font-size:11.35px">«IATA ABIE» Period</div>
<svg class="i" style="left:55px;top:146px;" width="9" height="9"><use href="#pm"/></svg>
<svg class="i" style="left:76px;top:143px;" width="16" height="14"><use href="#pkgf"/></svg>
<div class="t" style="left:97px;top:142.0px;line-height:16px;font-size:11.35px">«QDTLibrary» QDTLibrary</div>
<svg class="i" style="left:100px;top:162px;" width="16" height="16"><use href="#diag"/></svg>
<div class="t" style="left:120px;top:162.0px;line-height:16px;font-size:11.35px">QDTLibrary</div>
<svg class="i" style="left:78px;top:186px;" width="9" height="9"><use href="#pp"/></svg>
<svg class="i" style="left:101px;top:182px;" width="15" height="16"><use href="#clsb"/></svg>
<div class="t" style="left:120px;top:182.0px;line-height:16px;font-size:11.35px">«QDT» PostCode</div>
<svg class="i" style="left:55px;top:206px;" width="9" height="9"><use href="#pm"/></svg>
<svg class="i" style="left:76px;top:203px;" width="16" height="14"><use href="#pkgf"/></svg>
<div class="t" style="left:97px;top:202.0px;line-height:16px;font-size:11.35px">«UDTLibrary» UDTLibrary</div>
<svg class="i" style="left:100px;top:222px;" width="16" height="16"><use href="#diag"/></svg>
<div class="t" style="left:120px;top:222.0px;line-height:16px;font-size:11.35px">UDTLibrary</div>
<svg class="i" style="left:78px;top:246px;" width="9" height="9"><use href="#pp"/></svg>
<svg class="i" style="left:101px;top:242px;" width="15" height="16"><use href="#clsb"/></svg>
<div class="t" style="left:120px;top:242.0px;line-height:16px;font-size:11.35px">«UDT» Code</div>
<svg class="i" style="left:78px;top:266px;" width="9" height="9"><use href="#pp"/></svg>
<svg class="i" style="left:101px;top:262px;" width="15" height="16"><use href="#clsb"/></svg>
<div class="t" style="left:120px;top:262.0px;line-height:16px;font-size:11.35px">«UDT» Identifier</div>
<svg class="i" style="left:78px;top:286px;" width="9" height="9"><use href="#pp"/></svg>
<svg class="i" style="left:101px;top:282px;" width="15" height="16"><use href="#clsb"/></svg>
<div class="t" style="left:120px;top:282.0px;line-height:16px;font-size:11.35px">«UDT» Text</div>
<svg class="i" style="left:55px;top:306px;" width="9" height="9"><use href="#pm"/></svg>
<svg class="i" style="left:76px;top:303px;" width="16" height="14"><use href="#pkgf"/></svg>
<div class="t" style="left:97px;top:302.0px;line-height:16px;font-size:11.35px">«CCLibrary» CCLibrary</div>
<svg class="i" style="left:100px;top:322px;" width="16" height="16"><use href="#diag"/></svg>
<div class="t" style="left:120px;top:322.0px;line-height:16px;font-size:11.35px">CCLibrary</div>
<svg class="i" style="left:78px;top:346px;" width="9" height="9"><use href="#pm"/></svg>
<svg class="i" style="left:101px;top:342px;" width="15" height="16"><use href="#clsb"/></svg>
<div class="t" style="left:120px;top:342.0px;line-height:16px;font-size:11.35px">«ACC» ACCBBParent</div>
</div>
<div class="a" style="left:372px;top:676px;width:16px;height:349px;background:#f0f0f0"></div>
<div class="a" style="left:373px;top:696px;width:14px;height:16px;background:#cdcdcd"></div>
<svg class="i" style="left:375px;top:683px;" width="9" height="6"><use href="#up"/></svg>
<svg class="i" style="left:375px;top:1013px;" width="9" height="6"><use href="#dn"/></svg>
<div class="a" style="left:388px;top:676px;width:1px;height:349px;background:#fff"></div>
<div class="hdr" style="left:392px;top:625px;width:671px"></div>
<div class="t" style="left:397px;top:628.0px;line-height:16px;font-size:11.6px;color:#f4f6fa">Locals</div>
<svg class="i" style="left:1015px;top:634px;" width="9" height="6"><use href="#hdrdn"/></svg>
<svg class="i" style="left:1033px;top:632px;" width="8" height="9"><use href="#pin"/></svg>
<svg class="i" style="left:1048px;top:632px;" width="9" height="8"><use href="#hx"/></svg>
<div class="a" style="left:392px;top:647px;width:671px;height:378px;background:#fff"></div>
<div class="a" style="left:393px;top:647px;width:670px;height:24px;background:#fafbfd;border-bottom:1px solid #dde6f2"></div>
<div class="a" style="left:598px;top:648px;width:1px;height:22px;background:#e4e9f0"></div>
<div class="a" style="left:751px;top:648px;width:1px;height:22px;background:#e4e9f0"></div>
<div class="a" style="left:1033px;top:648px;width:1px;height:22px;background:#e4e9f0"></div>
<div class="t" style="left:398px;top:651.0px;line-height:16px;font-size:12px;letter-spacing:0.1px">Variable</div>
<div class="t" style="left:604px;top:651.0px;line-height:16px;font-size:12px;letter-spacing:0.1px">Value</div>
<div class="t" style="left:757px;top:651.0px;line-height:16px;font-size:12px;letter-spacing:0.1px">Type</div>
<div class="t" style="left:1039px;top:651.0px;line-height:16px;font-size:12px">A</div>
<div class="a" style="left:393px;top:671px;width:654px;height:339px;overflow:hidden">
<svg class="i" style="left:28px;top:6px;" width="9" height="9"><use href="#ppw"/></svg>
<svg class="i" style="left:43px;top:5px;" width="9" height="11"><use href="#diab"/></svg>
<div class="t" style="left:62px;top:1.5px;line-height:16px;font-size:11.8px">Properties</div>
<div class="t" style="left:369px;top:1.5px;line-height:16px;font-size:11.6px">IEADualSchemaPropEnum</div>
<svg class="i" style="left:43px;top:23px;" width="9" height="11"><use href="#dia"/></svg>
<div class="t" style="left:62px;top:19.5px;line-height:16px;font-size:11.8px">PropertyCount</div>
<div class="t" style="left:216px;top:19.5px;line-height:16px;font-size:11.8px">6</div>
<div class="t" style="left:369px;top:19.5px;line-height:16px;font-size:11.6px">integer</div>
<svg class="i" style="left:43px;top:41px;" width="9" height="11"><use href="#dia"/></svg>
<div class="t" style="left:62px;top:37.5px;line-height:16px;font-size:11.8px">TypeID</div>
<div class="t" style="left:216px;top:37.5px;line-height:16px;font-size:11.8px">10</div>
<div class="t" style="left:369px;top:37.5px;line-height:16px;font-size:11.6px">integer</div>
<svg class="i" style="left:43px;top:59px;" width="9" height="11"><use href="#dia"/></svg>
<div class="t" style="left:62px;top:55.5px;line-height:16px;font-size:11.8px">TypeName</div>
<div class="t" style="left:216px;top:55.5px;line-height:16px;font-size:11.8px">"Address"</div>
<div class="t" style="left:369px;top:55.5px;line-height:16px;font-size:11.6px">string</div>
<svg class="i" style="left:9px;top:78px;" width="9" height="9"><use href="#ppw"/></svg>
<svg class="i" style="left:24px;top:77px;" width="9" height="11"><use href="#diab"/></svg>
<div class="t" style="left:43px;top:73.5px;line-height:16px;font-size:11.8px">schema</div>
<div class="t" style="left:369px;top:73.5px;line-height:16px;font-size:11.6px">IEADualSchemaComposer</div>
<svg class="i" style="left:24px;top:95px;" width="9" height="11"><use href="#dia"/></svg>
<div class="t" style="left:43px;top:91.5px;line-height:16px;font-size:11.8px">mfRed</div>
<div class="t" style="left:216px;top:91.5px;line-height:16px;font-size:11.8px">7</div>
<div class="t" style="left:369px;top:91.5px;line-height:16px;font-size:11.6px">number</div>
<svg class="i" style="left:24px;top:113px;" width="9" height="11"><use href="#dia"/></svg>
<div class="t" style="left:43px;top:109.5px;line-height:16px;font-size:11.8px">mfBlue</div>
<div class="t" style="left:216px;top:109.5px;line-height:16px;font-size:11.8px">6</div>
<div class="t" style="left:369px;top:109.5px;line-height:16px;font-size:11.6px">number</div>
<svg class="i" style="left:24px;top:131px;" width="9" height="11"><use href="#dia"/></svg>
<div class="t" style="left:43px;top:127.5px;line-height:16px;font-size:11.8px">mfYellow</div>
<div class="t" style="left:216px;top:127.5px;line-height:16px;font-size:11.8px">5</div>
<div class="t" style="left:369px;top:127.5px;line-height:16px;font-size:11.6px">number</div>
<svg class="i" style="left:24px;top:149px;" width="9" height="11"><use href="#dia"/></svg>
<div class="t" style="left:43px;top:145.5px;line-height:16px;font-size:11.8px">mfGreen</div>
<div class="t" style="left:216px;top:145.5px;line-height:16px;font-size:11.8px">4</div>
<div class="t" style="left:369px;top:145.5px;line-height:16px;font-size:11.6px">number</div>
<svg class="i" style="left:24px;top:167px;" width="9" height="11"><use href="#dia"/></svg>
<div class="t" style="left:43px;top:163.5px;line-height:16px;font-size:11.8px">mfOrange</div>
<div class="t" style="left:216px;top:163.5px;line-height:16px;font-size:11.8px">3</div>
<div class="t" style="left:369px;top:163.5px;line-height:16px;font-size:11.6px">number</div>
<svg class="i" style="left:24px;top:185px;" width="9" height="11"><use href="#dia"/></svg>
<div class="t" style="left:43px;top:181.5px;line-height:16px;font-size:11.8px">mfPurple</div>
<div class="t" style="left:216px;top:181.5px;line-height:16px;font-size:11.8px">2</div>
<div class="t" style="left:369px;top:181.5px;line-height:16px;font-size:11.6px">number</div>
<svg class="i" style="left:24px;top:203px;" width="9" height="11"><use href="#dia"/></svg>
<div class="t" style="left:43px;top:199.5px;line-height:16px;font-size:11.8px">mfComplete</div>
<div class="t" style="left:216px;top:199.5px;line-height:16px;font-size:11.8px">1</div>
<div class="t" style="left:369px;top:199.5px;line-height:16px;font-size:11.6px">number</div>
<svg class="i" style="left:24px;top:221px;" width="9" height="11"><use href="#dia"/></svg>
<div class="t" style="left:43px;top:217.5px;line-height:16px;font-size:11.8px">mfNone</div>
<div class="t" style="left:216px;top:217.5px;line-height:16px;font-size:11.8px">0</div>
<div class="t" style="left:369px;top:217.5px;line-height:16px;font-size:11.6px">number</div>
<svg class="i" style="left:24px;top:239px;" width="9" height="11"><use href="#dia"/></svg>
<div class="t" style="left:43px;top:235.5px;line-height:16px;font-size:11.8px">alignJustify</div>
<div class="t" style="left:216px;top:235.5px;line-height:16px;font-size:11.8px">3</div>
<div class="t" style="left:369px;top:235.5px;line-height:16px;font-size:11.6px">number</div>
<svg class="i" style="left:24px;top:257px;" width="9" height="11"><use href="#dia"/></svg>
<div class="t" style="left:43px;top:253.5px;line-height:16px;font-size:11.8px">alignRight</div>
<div class="t" style="left:216px;top:253.5px;line-height:16px;font-size:11.8px">2</div>
<div class="t" style="left:369px;top:253.5px;line-height:16px;font-size:11.6px">number</div>
<svg class="i" style="left:24px;top:275px;" width="9" height="11"><use href="#dia"/></svg>
<div class="t" style="left:43px;top:271.5px;line-height:16px;font-size:11.8px">alignCenter</div>
<div class="t" style="left:216px;top:271.5px;line-height:16px;font-size:11.8px">1</div>
<div class="t" style="left:369px;top:271.5px;line-height:16px;font-size:11.6px">number</div>
<svg class="i" style="left:24px;top:293px;" width="9" height="11"><use href="#dia"/></svg>
<div class="t" style="left:43px;top:289.5px;line-height:16px;font-size:11.8px">alignLeft</div>
<div class="t" style="left:216px;top:289.5px;line-height:16px;font-size:11.8px">0</div>
<div class="t" style="left:369px;top:289.5px;line-height:16px;font-size:11.6px">number</div>
<svg class="i" style="left:24px;top:311px;" width="9" height="11"><use href="#dia"/></svg>
<div class="t" style="left:43px;top:307.5px;line-height:16px;font-size:11.8px">breakSection</div>
<div class="t" style="left:216px;top:307.5px;line-height:16px;font-size:11.8px">1</div>
<div class="t" style="left:369px;top:307.5px;line-height:16px;font-size:11.6px">number</div>
<svg class="i" style="left:24px;top:329px;" width="9" height="11"><use href="#dia"/></svg>
<div class="t" style="left:43px;top:325.5px;line-height:16px;font-size:11.8px">breakPage</div>
<div class="t" style="left:216px;top:325.5px;line-height:16px;font-size:11.8px">0</div>
<div class="t" style="left:369px;top:325.5px;line-height:16px;font-size:11.6px">number</div>
</div>
<div class="a" style="left:1047px;top:671px;width:16px;height:339px;background:#f0f0f0"></div>
<div class="a" style="left:1048px;top:727px;width:14px;height:23px;background:#cdcdcd"></div>
<svg class="i" style="left:1050px;top:677px;" width="9" height="6"><use href="#up"/></svg>
<svg class="i" style="left:1050px;top:998px;" width="9" height="6"><use href="#dn"/></svg>
<div class="a" style="left:393px;top:1010px;width:654px;height:15px;background:#f0f0f0"></div>
<div class="a" style="left:410px;top:1011px;width:530px;height:13px;background:#cdcdcd"></div>
<svg class="i" style="left:398px;top:1013px;" width="6" height="9"><use href="#lf"/></svg>
<svg class="i" style="left:1035px;top:1013px;" width="6" height="9"><use href="#rt"/></svg>
<div class="a" style="left:1047px;top:1010px;width:16px;height:15px;background:#c0cadb"></div>
<div class="hdr" style="left:1067px;top:625px;width:451px"></div>
<div class="t" style="left:1072px;top:628.0px;line-height:16px;font-size:11.6px;color:#f4f6fa">Watches</div>
<svg class="i" style="left:1470px;top:634px;" width="9" height="6"><use href="#hdrdn"/></svg>
<svg class="i" style="left:1488px;top:632px;" width="8" height="9"><use href="#pin"/></svg>
<svg class="i" style="left:1505px;top:632px;" width="9" height="8"><use href="#hx"/></svg>
<div class="a" style="left:1067px;top:647px;width:451px;height:27px;background:#bcc7d8"></div>
<div class="a" style="left:1072px;top:652px;width:375px;height:17px;background:#fff;border:1px solid #8e9bb0"></div>
<div class="t" style="left:1076px;top:652.5px;line-height:16px;font-size:11.6px">umlProp</div>
<svg class="i" style="left:1452px;top:652px" width="62" height="16">
 <rect x="1.5" y="4.5" width="13" height="11" fill="#fff" stroke="#3058b0"/><path d="M1.5 7.5h13M1.5 10.5h13M1.5 13h13M5.5 4.5v11M10 4.5v11" stroke="#3058b0" stroke-width="0.8"/><path d="M3 0v6M0 3h6" stroke="#20a030" stroke-width="1.6"/>
 <rect x="24.5" y="4.5" width="13" height="10" fill="#fff" stroke="#3058b0"/><path d="M24.5 7.5h13M24.5 10.5h13M28.5 4.5v10M33 4.5v10" stroke="#3058b0" stroke-width="0.8"/><path d="M31 9l7 7M38 9l-7 7" stroke="#e01010" stroke-width="1.6"/>
</svg>
<svg class="i" style="left:1497px;top:652px;" width="16" height="16"><use href="#help"/></svg>
<div class="a" style="left:1067px;top:674px;width:451px;height:351px;background:#fff"></div>
<div class="a" style="left:1068px;top:674px;width:450px;height:23px;background:#fafbfd;border-bottom:1px solid #dde6f2"></div>
<div class="a" style="left:1192px;top:675px;width:1px;height:22px;background:#e4e9f0"></div>
<div class="a" style="left:1317px;top:675px;width:1px;height:22px;background:#e4e9f0"></div>
<div class="a" style="left:1442px;top:675px;width:1px;height:22px;background:#e4e9f0"></div>
<div class="t" style="left:1073px;top:678.0px;line-height:16px;font-size:12px;letter-spacing:0.1px">Variable</div>
<div class="t" style="left:1198px;top:678.0px;line-height:16px;font-size:12px;letter-spacing:0.1px">Value</div>
<div class="t" style="left:1323px;top:678.0px;line-height:16px;font-size:12px;letter-spacing:0.1px">Type</div>
<div class="t" style="left:1448px;top:678.0px;line-height:16px;font-size:12px;letter-spacing:0.1px">Address</div>
<div class="a" style="left:1109px;top:698px;width:409px;height:18px;background:#000"></div>
<svg class="i" style="left:1077px;top:703px;" width="9" height="9"><use href="#pmw"/></svg>
<svg class="i" style="left:1092px;top:703px;" width="9" height="11"><use href="#diab"/></svg>
<div class="t" style="left:1111px;top:699.0px;line-height:16px;font-size:12px;color:#fff;letter-spacing:0.1px">umlProp</div>
<div class="t" style="left:1328px;top:699px;width:112px;overflow:hidden;line-height:16px;font-size:12px;color:#fff;letter-spacing:0.1px">IEADualSchemaPropertyEnum</div>
<svg class="i" style="left:1111px;top:721px;" width="9" height="11"><use href="#dia"/></svg>
<div class="t" style="left:1130px;top:717px;width:57px;overflow:hidden;line-height:16px;font-size:12px;letter-spacing:0.1px">Aggregation</div>
<div class="t" style="left:1203px;top:717px;width:112px;overflow:hidden;line-height:16px;font-size:12px;letter-spacing:0.1px">""</div>
<div class="t" style="left:1328px;top:717.0px;line-height:16px;font-size:12px;letter-spacing:0.1px">string</div>
<svg class="i" style="left:1111px;top:739px;" width="9" height="11"><use href="#dia"/></svg>
<div class="t" style="left:1130px;top:735px;width:57px;overflow:hidden;line-height:16px;font-size:12px;letter-spacing:0.1px">Annotation</div>
<div class="t" style="left:1203px;top:735px;width:112px;overflow:hidden;line-height:16px;font-size:12px;letter-spacing:0.1px">""</div>
<div class="t" style="left:1328px;top:735.0px;line-height:16px;font-size:12px;letter-spacing:0.1px">string</div>
<svg class="i" style="left:1111px;top:757px;" width="9" height="11"><use href="#dia"/></svg>
<div class="t" style="left:1130px;top:753px;width:57px;overflow:hidden;line-height:16px;font-size:12px;letter-spacing:0.1px">Cardinality</div>
<div class="t" style="left:1203px;top:753px;width:112px;overflow:hidden;line-height:16px;font-size:12px;letter-spacing:0.1px">"0...1"</div>
<div class="t" style="left:1328px;top:753.0px;line-height:16px;font-size:12px;letter-spacing:0.1px">string</div>
<svg class="i" style="left:1111px;top:775px;" width="9" height="11"><use href="#dia"/></svg>
<div class="t" style="left:1130px;top:771px;width:57px;overflow:hidden;line-height:16px;font-size:12px;letter-spacing:0.1px">Containment</div>
<div class="t" style="left:1203px;top:771px;width:112px;overflow:hidden;line-height:16px;font-size:12px;letter-spacing:0.1px">""</div>
<div class="t" style="left:1328px;top:771.0px;line-height:16px;font-size:12px;letter-spacing:0.1px">string</div>
<svg class="i" style="left:1111px;top:793px;" width="9" height="11"><use href="#dia"/></svg>
<div class="t" style="left:1130px;top:789px;width:57px;overflow:hidden;line-height:16px;font-size:12px;letter-spacing:0.1px">GUID</div>
<div class="t" style="left:1203px;top:789px;width:112px;overflow:hidden;line-height:16px;font-size:12px;letter-spacing:0.1px">"{6AC2440C-C2BC-4fa1</div>
<div class="t" style="left:1328px;top:789.0px;line-height:16px;font-size:12px;letter-spacing:0.1px">string</div>
<svg class="i" style="left:1111px;top:811px;" width="9" height="11"><use href="#dia"/></svg>
<div class="t" style="left:1130px;top:807px;width:57px;overflow:hidden;line-height:16px;font-size:12px;letter-spacing:0.1px">InitialValue</div>
<div class="t" style="left:1203px;top:807px;width:112px;overflow:hidden;line-height:16px;font-size:12px;letter-spacing:0.1px">""</div>
<div class="t" style="left:1328px;top:807.0px;line-height:16px;font-size:12px;letter-spacing:0.1px">string</div>
<svg class="i" style="left:1111px;top:829px;" width="9" height="11"><use href="#dia"/></svg>
<div class="t" style="left:1130px;top:825px;width:57px;overflow:hidden;line-height:16px;font-size:12px;letter-spacing:0.1px">Name</div>
<div class="t" style="left:1203px;top:825px;width:112px;overflow:hidden;line-height:16px;font-size:12px;letter-spacing:0.1px">"AttentionOf"</div>
<div class="t" style="left:1328px;top:825.0px;line-height:16px;font-size:12px;letter-spacing:0.1px">string</div>
<svg class="i" style="left:1111px;top:847px;" width="9" height="11"><use href="#dia"/></svg>
<div class="t" style="left:1130px;top:843px;width:57px;overflow:hidden;line-height:16px;font-size:12px;letter-spacing:0.1px">Parent</div>
<div class="t" style="left:1203px;top:843px;width:112px;overflow:hidden;line-height:16px;font-size:12px;letter-spacing:0.1px">10</div>
<div class="t" style="left:1328px;top:843.0px;line-height:16px;font-size:12px;letter-spacing:0.1px">integer</div>
<svg class="i" style="left:1111px;top:865px;" width="9" height="11"><use href="#dia"/></svg>
<div class="t" style="left:1130px;top:861px;width:57px;overflow:hidden;line-height:16px;font-size:12px;letter-spacing:0.1px">PrimitiveType</div>
<div class="t" style="left:1203px;top:861px;width:112px;overflow:hidden;line-height:16px;font-size:12px;letter-spacing:0.1px">""</div>
<div class="t" style="left:1328px;top:861.0px;line-height:16px;font-size:12px;letter-spacing:0.1px">string</div>
<svg class="i" style="left:1111px;top:883px;" width="9" height="11"><use href="#dia"/></svg>
<div class="t" style="left:1130px;top:879px;width:57px;overflow:hidden;line-height:16px;font-size:12px;letter-spacing:0.1px">PropID</div>
<div class="t" style="left:1203px;top:879px;width:112px;overflow:hidden;line-height:16px;font-size:12px;letter-spacing:0.1px">1</div>
<div class="t" style="left:1328px;top:879.0px;line-height:16px;font-size:12px;letter-spacing:0.1px">integer</div>
<svg class="i" style="left:1111px;top:901px;" width="9" height="11"><use href="#dia"/></svg>
<div class="t" style="left:1130px;top:897px;width:57px;overflow:hidden;line-height:16px;font-size:12px;letter-spacing:0.1px">Stereotype</div>
<div class="t" style="left:1203px;top:897px;width:112px;overflow:hidden;line-height:16px;font-size:12px;letter-spacing:0.1px">"BCC"</div>
<div class="t" style="left:1328px;top:897.0px;line-height:16px;font-size:12px;letter-spacing:0.1px">string</div>
<svg class="i" style="left:1111px;top:919px;" width="9" height="11"><use href="#dia"/></svg>
<div class="t" style="left:1130px;top:915px;width:57px;overflow:hidden;line-height:16px;font-size:12px;letter-spacing:0.1px">TypeID</div>
<div class="t" style="left:1203px;top:915px;width:112px;overflow:hidden;line-height:16px;font-size:12px;letter-spacing:0.1px">551</div>
<div class="t" style="left:1328px;top:915.0px;line-height:16px;font-size:12px;letter-spacing:0.1px">integer</div>
<svg class="i" style="left:1111px;top:937px;" width="9" height="11"><use href="#dia"/></svg>
<div class="t" style="left:1130px;top:933px;width:57px;overflow:hidden;line-height:16px;font-size:12px;letter-spacing:0.1px">UMLType</div>
<div class="t" style="left:1203px;top:933px;width:112px;overflow:hidden;line-height:16px;font-size:12px;letter-spacing:0.1px">"Attribute"</div>
<div class="t" style="left:1328px;top:933.0px;line-height:16px;font-size:12px;letter-spacing:0.1px">string</div>
<div class="a" style="left:1068px;top:1010px;width:450px;height:15px;background:#f0f0f0"></div>
<div class="a" style="left:1085px;top:1011px;width:234px;height:13px;background:#cdcdcd"></div>
<svg class="i" style="left:1073px;top:1013px;" width="6" height="9"><use href="#lf"/></svg>
<svg class="i" style="left:1505px;top:1013px;" width="6" height="9"><use href="#rt"/></svg>
<div class="hdr" style="left:1522px;top:625px;width:398px"></div>
<div class="t" style="left:1526px;top:628.0px;line-height:16px;font-size:11.3px;color:#f4f6fa;letter-spacing:-0.1px">Call Stack</div>
<svg class="i" style="left:1871px;top:634px;" width="9" height="6"><use href="#hdrdn"/></svg>
<svg class="i" style="left:1889px;top:632px;" width="8" height="9"><use href="#pin"/></svg>
<svg class="i" style="left:1905px;top:632px;" width="9" height="8"><use href="#hx"/></svg>
<div class="a" style="left:1522px;top:647px;width:398px;height:27px;background:#bcc7d8"></div>
<svg class="i" style="left:1521px;top:647px" width="140" height="27">
 <defs><linearGradient id="gfl" x1="0" y1="0" x2="1" y2="1"><stop offset="0" stop-color="#8a88e0"/><stop offset="1" stop-color="#302878"/></linearGradient>
 <linearGradient id="grs" x1="0" y1="0" x2="1" y2="1"><stop offset="0" stop-color="#f0b0a0"/><stop offset="1" stop-color="#c05848"/></linearGradient></defs>
 <path d="M7 7h13v13h-13z" fill="url(#gfl)"/><rect x="9" y="7" width="8" height="6" fill="#f4f6ff"/><rect x="10" y="15" width="5" height="4" fill="#f0f0f0"/><rect x="10" y="16" width="2.5" height="2" fill="#101010"/>
 <rect x="30.5" y="8.5" width="3" height="2" fill="#c8e0ff" stroke="#4848a8"/><rect x="36.5" y="8.5" width="3" height="2" fill="#c8e0ff" stroke="#4848a8"/>
 <path d="M32 11v7M38 11v7M32 13.5h8M32 16.5h8" stroke="#2a2a70" stroke-width="1.2"/>
 <path d="M51.5 6.5h5l2 2v8h-7z" fill="#fff" stroke="#2a2a70"/><path d="M53 9.5h4M53 11.5h4M53 13.5h4" stroke="#6a7ac0"/>
 <path d="M57.5 9.5h4l2 2v7.5h-6z" fill="#fff" stroke="#2a2a70"/><path d="M59 13h3.5M59 15h3.5M59 17h3.5" stroke="#6a7ac0"/>
 <rect x="75.5" y="8.5" width="8" height="3" fill="#e4e8f4" stroke="#7078a0"/>
 <rect x="98" y="10" width="8" height="8" fill="url(#grs)"/>
</svg>
<svg class="i" style="left:1637px;top:653px;" width="16" height="16"><use href="#help"/></svg>
<div class="a" style="left:1522px;top:674px;width:398px;height:351px;background:#fff"></div>
<svg class="i" style="left:1529px;top:678px" width="11" height="11"><path d="M0.5 3.5h4v-3l5 5l-5 5v-3h-4z" fill="#a8c8f0" stroke="#383880"/></svg>
<div class="t" style="left:1546px;top:675.0px;line-height:16px;font-size:11.6px">Thread 1</div>
<div class="t" style="left:1569px;top:692.0px;line-height:16px;font-size:11.65px">Schema Composer.Schema Composer::59</div>
<svg class="i" style="left:1552px;top:714px" width="11" height="11"><path d="M0.5 3.5h4v-3l5 5l-5 5v-3h-4z" fill="#e8a0c8" stroke="#5a2a40"/></svg>
<div class="t" style="left:1569px;top:710.0px;line-height:16px;font-size:11.65px">Schema Composer.Schema Composer::main::52</div>
<div class="a" style="left:0px;top:1025px;width:1920px;height:26px;background:#2b3a56"></div>
<div class="a" style="left:0px;top:1025px;width:389px;height:1px;background:#9aa0aa"></div>
<div class="a" style="left:0px;top:1050px;width:1920px;height:1px;background:#6a6a6a"></div>
<div class="t" style="left:2px;top:1030.0px;line-height:16px;font-size:11.25px;color:#fff">Line: 38 Column: 1</div>
<svg class="i" style="left:1598px;top:1029px" width="322" height="18">
 <circle cx="8" cy="9" r="6.8" fill="none" stroke="#c8ccd4" stroke-width="1.1"/><path d="M5 9h6" stroke="#c8ccd4" stroke-width="1.2"/>
 <path d="M23 9h86" stroke="#e0e0e0" stroke-width="2.4"/>
 <path d="M47 1h9v12l-4.5 3l-4.5-3z" fill="#e8e8e8" stroke="#b0b0b0" stroke-width="0.6"/>
 <circle cx="124" cy="9" r="6.8" fill="none" stroke="#c8ccd4" stroke-width="1.1"/><path d="M121 9h6M124 6v6" stroke="#c8ccd4" stroke-width="1.2"/>
 <rect x="135.5" y="2.5" width="183" height="13" fill="none" stroke="#b8c0cc"/>
</svg>
<div class="t" style="left:1741px;top:1030.0px;line-height:16px;font-size:11.6px;color:#8a92a0">CAP</div>
<div class="t" style="left:1780px;top:1030.0px;line-height:16px;font-size:11.6px;color:#fff">NUM</div>
<div class="t" style="left:1825px;top:1030.0px;line-height:16px;font-size:11.6px;color:#8a92a0">SCRL</div>
<div class="t" style="left:1870px;top:1030.0px;line-height:16px;font-size:11.6px;color:#8a92a0">CLOUD</div>
<svg class="i" style="left:0;top:1043px" width="60" height="8"><path d="M13 6L30 4V8H13z" fill="#fff"/><path d="M31 4L53 1V8H31z" fill="#fff"/><path d="M0 7.5h1920" stroke="#555"/></svg>
</body></html>
